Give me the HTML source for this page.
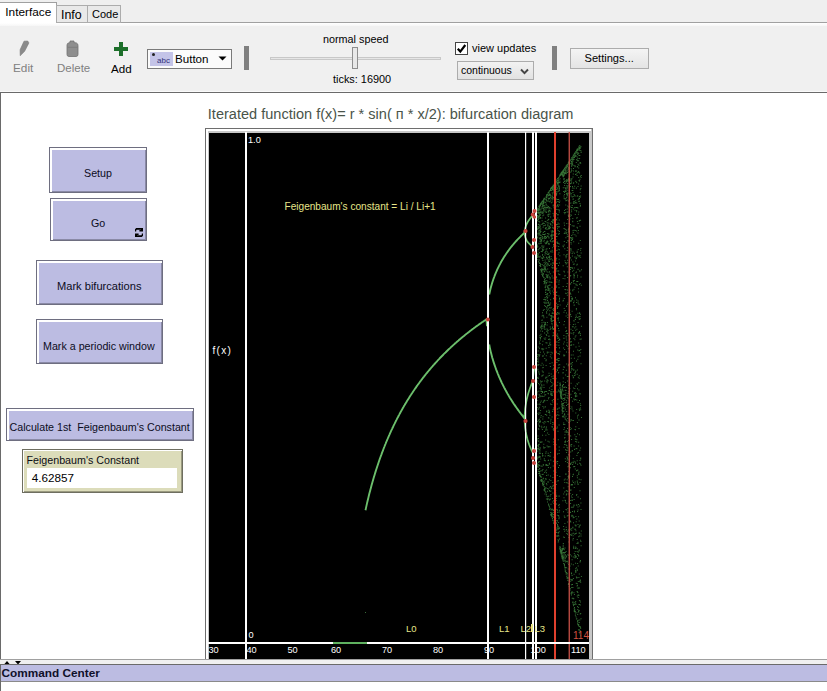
<!DOCTYPE html>
<html><head><meta charset="utf-8">
<style>
*{margin:0;padding:0;box-sizing:border-box}
html,body{width:827px;height:691px;overflow:hidden;background:#fff}
body{position:relative;font-family:"Liberation Sans",sans-serif;font-size:10.7px;color:#000}
.a{position:absolute}
.t{position:absolute;white-space:nowrap;line-height:1}
.btn{position:absolute;background:#bcbce2;border:1px solid #6e6e80;box-shadow:inset 2px 2px 0 #fff, inset -1px -1px 0 #8a8aa6}
.sep{position:absolute;background:#808080;width:5px}
</style></head><body>
<!-- tab strip -->
<div class="a" style="left:0;top:0;width:827px;height:26px;background:#efefef"></div>
<div class="a" style="left:0;top:22px;width:827px;height:1px;background:#a0a0a0"></div>
<div class="a" style="left:0;top:23px;width:827px;height:3px;background:linear-gradient(#fff,#f6f6f6)"></div>
<div class="a" style="left:0;top:2px;width:57px;height:21px;background:#fff;border:1px solid #a0a0a0;border-bottom:none;border-left:none"></div>
<div class="t" style="left:5.3px;top:7px;font-size:11.8px">Interface</div>
<div class="a" style="left:56px;top:5px;width:32px;height:18px;background:#e9e9e9;border:1px solid #acacac"></div>
<div class="t" style="left:61px;top:8.5px;font-size:12.4px">Info</div>
<div class="a" style="left:87px;top:5px;width:34px;height:18px;background:#e9e9e9;border:1px solid #acacac"></div>
<div class="t" style="left:92px;top:9px;font-size:11px">Code</div>

<!-- toolbar -->
<div class="a" style="left:0;top:26px;width:827px;height:66px;background:#f0f0f0"></div>
<div class="a" style="left:0;top:91px;width:827px;height:1px;background:#fafafa"></div>
<div class="a" style="left:0;top:92px;width:827px;height:1px;background:#6a6a6a"></div>
<!-- Edit icon -->
<svg class="a" style="left:15px;top:38px" width="20" height="20"><path d="M5.2 17.7 L5.1 11.8 L9 3.2 L12.7 3 L13.9 4.9 L9.6 13.3 Z" fill="#8a8a8a" stroke="#7a7a7a" stroke-width="0.6"/></svg>
<div class="t" style="left:13px;top:63px;font-size:11.8px;color:#808080">Edit</div>
<!-- Delete icon -->
<svg class="a" style="left:62px;top:38px" width="20" height="20"><path d="M8 3 L12 3 L12 4.6 L14.5 5 Q16 5.6 16 7.5 L16 16.5 Q16 18.5 14 18.5 L7 18.5 Q5 18.5 5 16.5 L5 7 Q5 5.2 7 4.8 L8 4.6 Z" fill="#8e8e8e" stroke="#727272" stroke-width="0.8"/><path d="M5.5 9.3 L15.5 9.3" stroke="#777" stroke-width="0.8"/></svg>
<div class="t" style="left:57px;top:63px;font-size:11.5px;color:#808080">Delete</div>
<!-- Add icon -->
<svg class="a" style="left:113px;top:41px" width="16" height="16"><path d="M6 1h4v5h5v4h-5v5h-4v-5h-5v-4h5z" fill="#1d6f2a"/></svg>
<div class="t" style="left:111px;top:62.5px;font-size:11.6px;color:#000">Add</div>
<!-- widget dropdown -->
<div class="a" style="left:147px;top:49px;width:85px;height:20px;background:#fbfbfb;border:1px solid #7a7a7a"></div>
<div class="a" style="left:150px;top:52px;width:23px;height:14px;background:#c4c4e8"></div>
<div class="t" style="left:157px;top:57px;font-size:8px;color:#30307a">abc</div>
<div class="a" style="left:152px;top:53px;width:3px;height:3px;background:#222;border-radius:50%"></div>
<div class="t" style="left:175px;top:53px;font-size:11.6px">Button</div>
<svg class="a" style="left:218px;top:56px" width="10" height="6"><path d="M0.5 0.5h8l-4 4z" fill="#000"/></svg>
<div class="sep" style="left:244px;top:46px;height:24px"></div>
<!-- speed slider -->
<div class="t" style="left:323px;top:34px;font-size:10.8px">normal speed</div>
<div class="a" style="left:270px;top:57px;width:171px;height:3px;background:#e6e6e6;border:1px solid #c8c8c8"></div>
<div class="a" style="left:352px;top:47px;width:6px;height:22px;background:#e8e8e8;border:1px solid #8e8e8e"></div>
<div class="t" style="left:333px;top:74px;font-size:10.9px">ticks: 16900</div>
<!-- view updates -->
<div class="a" style="left:455px;top:42px;width:13px;height:13px;background:#fff;border:1px solid #444"></div>
<svg class="a" style="left:456px;top:43px" width="11" height="11"><path d="M1.8 5.8 L4.3 8.6 L9.3 2" fill="none" stroke="#000" stroke-width="2.2"/></svg>
<div class="t" style="left:472px;top:43px;font-size:11px">view updates</div>
<div class="a" style="left:457px;top:61px;width:77px;height:19px;background:linear-gradient(#f2f2f2,#e2e2e2);border:1px solid #acacac"></div>
<div class="t" style="left:461px;top:65px;font-size:10.5px">continuous</div>
<svg class="a" style="left:520px;top:68px" width="9" height="7"><path d="M1 1.5 L4.5 5.2 L8 1.5" fill="none" stroke="#444" stroke-width="1.9"/></svg>
<div class="sep" style="left:552px;top:46px;height:24px"></div>
<div class="a" style="left:570px;top:48px;width:79px;height:21px;background:linear-gradient(#f4f4f4,#e4e4e4);border:1px solid #acacac"></div>
<div class="t" style="left:584.5px;top:53px;font-size:11.1px">Settings...</div>

<!-- interface area -->
<div class="a" style="left:0;top:92px;width:1px;height:568px;background:#6a6a6a"></div>

<div class="btn" style="left:49px;top:147px;width:98px;height:46px"></div>
<div class="t" style="left:84px;top:168px;color:#0c0c22">Setup</div>
<div class="btn" style="left:50px;top:198px;width:97px;height:43px"></div>
<div class="t" style="left:91px;top:218px;color:#0c0c22">Go</div>
<svg class="a" style="left:135px;top:228px" width="9" height="10"><g fill="#000"><path d="M1.2 0h6.8v3.6h-3.6v-1.6h1.6v-0.2h-4.4l-0.4 0.6v1h-1.2v-2.2z"/><path d="M6.8 9h-6.8v-3.6h3.6v1.6h-1.6v0.2h4.4l0.4-0.6v-1h1.2v2.2z"/></g></svg>
<div class="btn" style="left:36px;top:260px;width:127px;height:45px"></div>
<div class="t" style="left:57px;top:280.5px;font-size:11.1px;color:#0c0c22">Mark bifurcations</div>
<div class="btn" style="left:36px;top:319px;width:127px;height:45px"></div>
<div class="t" style="left:43px;top:341px;color:#0c0c22">Mark a periodic window</div>
<div class="btn" style="left:6px;top:408px;width:188px;height:33px"></div>
<div class="t" style="left:9.5px;top:422px;color:#0c0c22">Calculate 1st&nbsp; Feigenbaum's Constant</div>
<!-- monitor -->
<div class="a" style="left:22px;top:449px;width:161px;height:44px;background:#dcdcba;border:1px solid #6e6e60;box-shadow:inset 1px 1px 0 #fff, inset -1px -1px 0 #9a9a80"></div>
<div class="t" style="left:26.5px;top:455px;color:#0c0c14">Feigenbaum's Constant</div>
<div class="a" style="left:27px;top:468px;width:150px;height:20px;background:#fff"></div>
<div class="t" style="left:31.8px;top:471.5px;font-size:11.7px;color:#000">4.62857</div>

<!-- plot title -->
<div class="t" style="left:207.8px;top:107px;font-size:14.55px;color:#4a544a">Iterated function f(x)= r * sin( п * x/2): bifurcation diagram</div>

<!-- plot -->
<div class="a" style="left:205px;top:128px;width:388px;height:540px;background:#c8c8c8;border:1px solid #6e6e6e"></div>
<div class="a" style="left:206px;top:129px;width:2px;height:540px;background:#fff"></div>
<div class="a" style="left:206px;top:129px;width:385px;height:2px;background:#fff"></div>
<div class="a" style="left:209px;top:133px;width:380px;height:540px;background:#000"></div>
<svg class="a" style="left:0;top:0" width="827" height="659" viewBox="0 0 827 659">

<path d="M536.9 391.4h1v1h-1zM536.7 228.7h1v1h-1zM537.2 212.2h1v1h-1zM536.5 413.0h1v1h-1zM537.3 354.0h1v1h-1zM537.3 209.0h1v1h-1zM537.2 361.0h1v1h-1zM537.4 369.6h1v1h-1zM537.5 212.5h1v1h-1zM537.3 210.4h1v1h-1zM537.6 208.6h1v1h-1zM537.3 215.0h1v1h-1zM537.2 246.5h1v1h-1zM538.0 438.1h1v1h-1zM537.9 470.7h1v1h-1zM538.4 220.9h1v1h-1zM537.9 217.5h1v1h-1zM538.5 216.6h1v1h-1zM538.8 248.2h1v1h-1zM538.8 251.9h1v1h-1zM539.0 256.6h1v1h-1zM538.3 390.7h1v1h-1zM538.4 226.5h1v1h-1zM538.5 227.7h1v1h-1zM538.8 215.8h1v1h-1zM538.6 261.9h1v1h-1zM538.8 449.0h1v1h-1zM538.7 210.2h1v1h-1zM539.7 204.8h1v1h-1zM539.3 452.9h1v1h-1zM539.6 218.1h1v1h-1zM539.6 343.0h1v1h-1zM539.9 452.7h1v1h-1zM540.1 214.3h1v1h-1zM539.8 217.8h1v1h-1zM540.0 380.6h1v1h-1zM539.7 226.6h1v1h-1zM540.0 447.5h1v1h-1zM540.0 264.4h1v1h-1zM540.2 330.6h1v1h-1zM540.3 327.3h1v1h-1zM540.7 479.4h1v1h-1zM540.5 239.7h1v1h-1zM540.6 202.5h1v1h-1zM541.2 202.6h1v1h-1zM540.5 241.8h1v1h-1zM540.6 271.4h1v1h-1zM540.8 480.4h1v1h-1zM541.7 380.7h1v1h-1zM541.5 272.6h1v1h-1zM541.7 258.1h1v1h-1zM542.1 258.3h1v1h-1zM541.4 385.3h1v1h-1zM542.2 480.2h1v1h-1zM541.6 247.7h1v1h-1zM542.0 274.9h1v1h-1zM542.3 455.2h1v1h-1zM542.5 416.2h1v1h-1zM542.0 391.0h1v1h-1zM542.4 340.7h1v1h-1zM542.0 330.7h1v1h-1zM542.4 257.3h1v1h-1zM543.2 225.2h1v1h-1zM543.2 401.2h1v1h-1zM543.0 200.5h1v1h-1zM543.3 483.6h1v1h-1zM543.5 423.2h1v1h-1zM543.0 234.1h1v1h-1zM543.8 231.0h1v1h-1zM543.3 443.7h1v1h-1zM543.2 199.4h1v1h-1zM543.6 489.1h1v1h-1zM543.8 325.7h1v1h-1zM544.0 323.8h1v1h-1zM544.1 488.1h1v1h-1zM543.5 205.0h1v1h-1zM544.2 268.6h1v1h-1zM544.6 242.2h1v1h-1zM544.5 447.1h1v1h-1zM544.9 267.5h1v1h-1zM544.5 339.1h1v1h-1zM544.9 227.9h1v1h-1zM544.3 280.4h1v1h-1zM545.2 285.8h1v1h-1zM544.8 268.5h1v1h-1zM545.4 284.5h1v1h-1zM544.9 287.2h1v1h-1zM545.3 477.9h1v1h-1zM545.6 248.8h1v1h-1zM545.6 451.2h1v1h-1zM545.6 427.7h1v1h-1zM546.1 311.2h1v1h-1zM545.3 243.3h1v1h-1zM545.4 434.7h1v1h-1zM546.0 311.4h1v1h-1zM546.5 301.7h1v1h-1zM546.3 429.2h1v1h-1zM546.0 237.1h1v1h-1zM545.9 282.0h1v1h-1zM546.3 302.8h1v1h-1zM546.5 429.4h1v1h-1zM546.6 265.4h1v1h-1zM546.8 488.1h1v1h-1zM546.6 324.4h1v1h-1zM547.3 277.3h1v1h-1zM546.8 240.5h1v1h-1zM546.7 235.9h1v1h-1zM547.0 241.6h1v1h-1zM547.7 474.5h1v1h-1zM547.1 286.7h1v1h-1zM547.3 263.4h1v1h-1zM548.0 421.2h1v1h-1zM547.5 235.5h1v1h-1zM548.1 253.7h1v1h-1zM547.4 455.2h1v1h-1zM548.4 303.3h1v1h-1zM547.8 459.9h1v1h-1zM547.9 211.4h1v1h-1zM548.5 305.0h1v1h-1zM548.9 255.6h1v1h-1zM549.0 261.0h1v1h-1zM548.9 201.2h1v1h-1zM549.1 284.8h1v1h-1zM549.3 207.0h1v1h-1zM549.0 198.1h1v1h-1zM548.6 191.2h1v1h-1zM549.4 227.8h1v1h-1zM549.1 390.0h1v1h-1zM549.1 265.0h1v1h-1zM549.4 303.9h1v1h-1zM549.0 264.9h1v1h-1zM549.1 257.5h1v1h-1zM549.5 491.0h1v1h-1zM549.9 365.9h1v1h-1zM550.1 467.3h1v1h-1zM550.5 503.7h1v1h-1zM550.4 394.3h1v1h-1zM550.6 256.1h1v1h-1zM550.4 263.8h1v1h-1zM550.6 351.8h1v1h-1zM550.6 318.3h1v1h-1zM550.2 392.7h1v1h-1zM550.3 394.0h1v1h-1zM551.1 188.0h1v1h-1zM550.6 513.9h1v1h-1zM551.3 188.3h1v1h-1zM551.1 512.4h1v1h-1zM550.7 373.5h1v1h-1zM551.4 188.1h1v1h-1zM551.3 403.9h1v1h-1zM551.1 220.9h1v1h-1zM551.4 266.8h1v1h-1zM551.5 234.2h1v1h-1zM551.6 312.7h1v1h-1zM552.1 247.3h1v1h-1zM551.7 201.4h1v1h-1zM552.0 394.7h1v1h-1zM552.3 485.7h1v1h-1zM552.7 227.4h1v1h-1zM552.0 219.5h1v1h-1zM552.1 237.9h1v1h-1zM552.3 501.6h1v1h-1zM552.4 311.8h1v1h-1zM552.5 227.4h1v1h-1zM552.5 277.6h1v1h-1zM552.7 205.4h1v1h-1zM552.8 231.3h1v1h-1zM553.2 214.5h1v1h-1zM553.4 244.4h1v1h-1zM553.3 378.3h1v1h-1zM553.2 470.4h1v1h-1zM553.2 500.2h1v1h-1zM553.5 456.7h1v1h-1zM553.5 333.5h1v1h-1zM553.9 194.6h1v1h-1zM554.4 234.6h1v1h-1zM554.3 278.8h1v1h-1zM553.9 254.1h1v1h-1zM553.8 211.6h1v1h-1zM554.0 474.8h1v1h-1zM554.4 224.9h1v1h-1zM554.5 208.6h1v1h-1zM554.9 496.7h1v1h-1zM554.4 190.1h1v1h-1zM554.7 301.2h1v1h-1zM555.2 194.5h1v1h-1zM555.2 241.8h1v1h-1zM555.2 346.8h1v1h-1zM555.7 181.2h1v1h-1zM555.0 180.9h1v1h-1zM555.2 469.4h1v1h-1zM555.7 371.3h1v1h-1zM555.8 224.0h1v1h-1zM556.3 181.7h1v1h-1zM556.4 527.4h1v1h-1zM556.1 193.0h1v1h-1zM556.4 520.1h1v1h-1zM556.4 532.1h1v1h-1zM555.9 359.2h1v1h-1zM556.5 324.8h1v1h-1zM556.3 291.4h1v1h-1zM556.5 305.4h1v1h-1zM556.4 205.6h1v1h-1zM556.3 270.4h1v1h-1zM557.3 381.8h1v1h-1zM557.2 224.1h1v1h-1zM557.4 411.5h1v1h-1zM557.0 228.3h1v1h-1zM557.2 460.9h1v1h-1zM557.1 178.1h1v1h-1zM557.6 270.6h1v1h-1zM557.9 364.4h1v1h-1zM558.0 264.9h1v1h-1zM558.2 312.5h1v1h-1zM557.7 526.3h1v1h-1zM558.2 270.5h1v1h-1zM557.7 253.7h1v1h-1zM558.2 245.9h1v1h-1zM557.9 360.3h1v1h-1zM558.4 535.6h1v1h-1zM558.5 281.6h1v1h-1zM558.4 209.0h1v1h-1zM558.5 353.1h1v1h-1zM559.0 262.4h1v1h-1zM558.9 347.5h1v1h-1zM558.9 354.0h1v1h-1zM558.7 367.1h1v1h-1zM559.0 187.6h1v1h-1zM559.6 178.2h1v1h-1zM559.9 546.8h1v1h-1zM559.4 385.2h1v1h-1zM560.0 387.6h1v1h-1zM560.1 174.5h1v1h-1zM559.5 390.2h1v1h-1zM559.7 174.2h1v1h-1zM560.2 550.2h1v1h-1zM559.9 550.6h1v1h-1zM560.7 550.9h1v1h-1zM560.2 551.2h1v1h-1zM560.6 551.5h1v1h-1zM560.7 551.7h1v1h-1zM560.3 396.0h1v1h-1zM561.1 173.3h1v1h-1zM560.6 397.1h1v1h-1zM560.5 173.1h1v1h-1zM560.6 552.9h1v1h-1zM561.1 551.9h1v1h-1zM561.3 173.6h1v1h-1zM561.1 392.2h1v1h-1zM561.7 405.4h1v1h-1zM561.3 171.8h1v1h-1zM561.9 171.7h1v1h-1zM561.2 549.4h1v1h-1zM561.6 171.4h1v1h-1zM561.6 410.2h1v1h-1zM561.9 558.0h1v1h-1zM562.0 555.9h1v1h-1zM562.1 410.7h1v1h-1zM562.7 548.8h1v1h-1zM562.5 403.5h1v1h-1zM562.6 390.6h1v1h-1zM562.5 552.0h1v1h-1zM563.0 555.4h1v1h-1zM562.8 368.9h1v1h-1zM563.1 343.4h1v1h-1zM563.4 366.2h1v1h-1zM563.2 493.4h1v1h-1zM563.1 347.5h1v1h-1zM563.1 563.0h1v1h-1zM563.8 515.4h1v1h-1zM563.8 556.6h1v1h-1zM563.9 564.8h1v1h-1zM563.4 334.9h1v1h-1zM563.7 222.6h1v1h-1zM564.3 183.0h1v1h-1zM563.7 212.0h1v1h-1zM564.4 171.9h1v1h-1zM564.2 354.8h1v1h-1zM564.0 224.7h1v1h-1zM564.3 232.8h1v1h-1zM564.1 444.1h1v1h-1zM564.8 418.7h1v1h-1zM564.9 558.3h1v1h-1zM564.3 516.9h1v1h-1zM564.7 231.4h1v1h-1zM565.3 166.7h1v1h-1zM564.8 458.3h1v1h-1zM565.2 561.6h1v1h-1zM565.6 490.4h1v1h-1zM565.5 509.0h1v1h-1zM565.1 566.9h1v1h-1zM566.0 351.6h1v1h-1zM565.9 419.4h1v1h-1zM565.9 369.7h1v1h-1zM565.7 431.3h1v1h-1zM566.1 187.4h1v1h-1zM566.0 572.0h1v1h-1zM565.8 430.1h1v1h-1zM565.9 171.5h1v1h-1zM565.9 286.1h1v1h-1zM566.2 363.5h1v1h-1zM566.3 167.7h1v1h-1zM566.8 395.3h1v1h-1zM566.9 578.3h1v1h-1zM567.0 277.1h1v1h-1zM567.3 262.2h1v1h-1zM566.7 479.2h1v1h-1zM567.1 304.1h1v1h-1zM566.9 183.1h1v1h-1zM567.3 292.3h1v1h-1zM567.1 171.8h1v1h-1zM567.2 240.3h1v1h-1zM567.3 403.9h1v1h-1zM567.7 167.2h1v1h-1zM568.2 463.3h1v1h-1zM567.8 162.2h1v1h-1zM568.3 583.3h1v1h-1zM567.9 584.1h1v1h-1zM568.1 364.3h1v1h-1zM568.4 465.8h1v1h-1zM568.1 240.5h1v1h-1zM568.5 226.5h1v1h-1zM568.8 228.3h1v1h-1zM569.1 416.3h1v1h-1zM568.5 174.5h1v1h-1zM569.3 435.3h1v1h-1zM569.2 309.7h1v1h-1zM569.3 271.5h1v1h-1zM568.9 454.6h1v1h-1zM569.8 275.4h1v1h-1zM569.3 388.0h1v1h-1zM569.6 257.8h1v1h-1zM569.7 341.6h1v1h-1zM570.2 435.5h1v1h-1zM570.0 341.6h1v1h-1zM570.5 267.3h1v1h-1zM569.8 193.6h1v1h-1zM570.4 489.2h1v1h-1zM570.4 393.7h1v1h-1zM570.4 202.5h1v1h-1zM570.6 382.7h1v1h-1zM570.7 527.9h1v1h-1zM570.5 238.2h1v1h-1zM570.9 428.2h1v1h-1zM570.5 242.1h1v1h-1zM571.0 160.9h1v1h-1zM571.1 495.4h1v1h-1zM570.9 344.7h1v1h-1zM571.4 514.7h1v1h-1zM571.6 190.0h1v1h-1zM571.1 157.3h1v1h-1zM571.4 237.6h1v1h-1zM571.3 170.0h1v1h-1zM571.9 362.0h1v1h-1zM571.5 408.5h1v1h-1zM571.7 484.6h1v1h-1zM572.0 186.1h1v1h-1zM572.2 390.8h1v1h-1zM571.8 515.2h1v1h-1zM572.8 564.3h1v1h-1zM572.2 506.7h1v1h-1zM572.7 326.2h1v1h-1zM572.4 156.0h1v1h-1zM572.9 155.1h1v1h-1zM572.8 173.6h1v1h-1zM572.8 556.6h1v1h-1zM573.1 302.3h1v1h-1zM573.3 320.3h1v1h-1zM573.4 369.2h1v1h-1zM573.6 194.1h1v1h-1zM573.3 332.0h1v1h-1zM573.2 545.7h1v1h-1zM573.5 153.8h1v1h-1zM573.6 273.4h1v1h-1zM574.0 201.2h1v1h-1zM573.9 510.6h1v1h-1zM573.9 195.2h1v1h-1zM573.8 553.0h1v1h-1zM574.4 554.8h1v1h-1zM574.0 152.8h1v1h-1zM574.5 393.0h1v1h-1zM574.8 153.6h1v1h-1zM574.8 214.1h1v1h-1zM574.5 256.8h1v1h-1zM574.8 438.5h1v1h-1zM575.4 603.8h1v1h-1zM574.7 323.8h1v1h-1zM575.4 516.1h1v1h-1zM575.2 568.3h1v1h-1zM575.5 346.6h1v1h-1zM575.4 530.3h1v1h-1zM575.2 570.9h1v1h-1zM575.8 162.0h1v1h-1zM575.3 412.5h1v1h-1zM576.3 504.4h1v1h-1zM576.3 518.5h1v1h-1zM576.0 258.1h1v1h-1zM576.2 441.5h1v1h-1zM576.3 281.1h1v1h-1zM576.9 422.1h1v1h-1zM576.0 149.8h1v1h-1zM576.4 395.4h1v1h-1zM576.6 585.4h1v1h-1zM577.1 511.1h1v1h-1zM577.1 606.0h1v1h-1zM576.9 369.6h1v1h-1zM576.6 577.0h1v1h-1zM577.3 148.9h1v1h-1zM577.2 553.9h1v1h-1zM577.0 415.4h1v1h-1zM577.6 149.3h1v1h-1zM577.5 232.5h1v1h-1zM577.5 524.0h1v1h-1zM577.6 542.8h1v1h-1zM577.9 414.6h1v1h-1zM577.7 302.6h1v1h-1zM578.0 291.4h1v1h-1zM578.6 345.7h1v1h-1zM578.3 255.3h1v1h-1zM578.2 629.5h1v1h-1zM578.5 604.1h1v1h-1zM579.0 198.0h1v1h-1zM579.1 157.9h1v1h-1zM579.0 399.9h1v1h-1zM579.3 148.0h1v1h-1zM579.3 155.0h1v1h-1zM579.3 350.1h1v1h-1zM579.1 149.3h1v1h-1zM578.9 535.4h1v1h-1zM579.6 150.0h1v1h-1zM579.6 561.5h1v1h-1zM580.1 249.8h1v1h-1zM579.5 392.9h1v1h-1zM580.2 162.8h1v1h-1zM579.6 270.4h1v1h-1zM580.4 248.1h1v1h-1zM580.6 545.3h1v1h-1zM579.7 581.3h1v1h-1zM580.1 634.7h1v1h-1zM581.0 417.1h1v1h-1zM580.8 530.6h1v1h-1zM536.1 208.8h1v1h-1zM536.1 418.1h1v1h-1zM536.4 457.7h1v1h-1zM537.2 212.6h1v1h-1zM537.2 220.2h1v1h-1zM536.9 465.5h1v1h-1zM537.4 215.8h1v1h-1zM537.6 211.8h1v1h-1zM537.1 456.6h1v1h-1zM537.8 461.9h1v1h-1zM537.3 466.3h1v1h-1zM537.4 450.4h1v1h-1zM537.2 376.9h1v1h-1zM537.5 226.0h1v1h-1zM538.0 260.8h1v1h-1zM537.5 435.5h1v1h-1zM538.1 444.0h1v1h-1zM537.9 446.0h1v1h-1zM538.5 372.6h1v1h-1zM538.0 364.6h1v1h-1zM538.2 354.6h1v1h-1zM538.4 205.7h1v1h-1zM538.8 421.8h1v1h-1zM539.1 418.7h1v1h-1zM539.2 447.4h1v1h-1zM539.2 343.3h1v1h-1zM539.3 234.0h1v1h-1zM539.2 461.3h1v1h-1zM539.1 475.0h1v1h-1zM539.1 237.6h1v1h-1zM539.9 441.5h1v1h-1zM539.5 224.4h1v1h-1zM539.9 237.0h1v1h-1zM539.4 450.6h1v1h-1zM539.8 441.9h1v1h-1zM539.6 204.6h1v1h-1zM540.0 420.4h1v1h-1zM540.4 231.0h1v1h-1zM540.1 336.9h1v1h-1zM540.6 234.9h1v1h-1zM540.1 238.2h1v1h-1zM540.5 269.6h1v1h-1zM540.6 389.3h1v1h-1zM540.8 479.9h1v1h-1zM540.6 479.6h1v1h-1zM541.2 384.3h1v1h-1zM541.5 322.3h1v1h-1zM541.5 270.4h1v1h-1zM540.8 202.7h1v1h-1zM541.4 319.9h1v1h-1zM541.3 348.5h1v1h-1zM541.7 348.0h1v1h-1zM541.3 201.4h1v1h-1zM542.0 269.3h1v1h-1zM541.8 370.4h1v1h-1zM542.4 314.8h1v1h-1zM541.6 236.4h1v1h-1zM542.1 206.0h1v1h-1zM542.3 200.3h1v1h-1zM542.7 222.4h1v1h-1zM542.8 231.9h1v1h-1zM542.3 349.2h1v1h-1zM542.5 421.9h1v1h-1zM543.0 200.4h1v1h-1zM542.8 484.1h1v1h-1zM542.8 273.0h1v1h-1zM543.5 208.2h1v1h-1zM543.5 400.2h1v1h-1zM543.2 407.4h1v1h-1zM543.4 223.0h1v1h-1zM543.9 486.6h1v1h-1zM543.3 281.0h1v1h-1zM544.1 235.7h1v1h-1zM544.2 237.8h1v1h-1zM544.1 279.0h1v1h-1zM544.2 471.9h1v1h-1zM544.3 324.7h1v1h-1zM544.2 380.6h1v1h-1zM544.4 224.9h1v1h-1zM544.1 326.4h1v1h-1zM544.6 220.9h1v1h-1zM544.8 414.0h1v1h-1zM544.7 301.7h1v1h-1zM545.0 292.0h1v1h-1zM544.9 324.0h1v1h-1zM545.3 294.0h1v1h-1zM545.3 289.2h1v1h-1zM544.8 261.6h1v1h-1zM545.6 364.9h1v1h-1zM545.2 227.6h1v1h-1zM545.1 207.4h1v1h-1zM545.2 251.3h1v1h-1zM545.5 376.8h1v1h-1zM545.8 212.0h1v1h-1zM545.7 250.6h1v1h-1zM545.7 264.6h1v1h-1zM546.4 207.6h1v1h-1zM546.1 390.9h1v1h-1zM546.7 297.0h1v1h-1zM546.1 262.3h1v1h-1zM546.7 207.2h1v1h-1zM546.5 328.5h1v1h-1zM547.0 275.6h1v1h-1zM546.9 233.0h1v1h-1zM547.1 305.0h1v1h-1zM546.6 382.2h1v1h-1zM547.4 392.8h1v1h-1zM547.1 379.4h1v1h-1zM547.5 254.0h1v1h-1zM547.7 287.3h1v1h-1zM547.1 331.5h1v1h-1zM547.1 200.5h1v1h-1zM548.0 393.2h1v1h-1zM548.3 351.8h1v1h-1zM548.3 228.6h1v1h-1zM547.9 259.6h1v1h-1zM548.4 233.8h1v1h-1zM547.7 452.7h1v1h-1zM547.9 256.7h1v1h-1zM548.5 347.0h1v1h-1zM548.5 335.5h1v1h-1zM548.9 479.3h1v1h-1zM548.4 289.2h1v1h-1zM548.8 463.8h1v1h-1zM549.4 487.3h1v1h-1zM548.8 505.9h1v1h-1zM549.0 410.7h1v1h-1zM549.3 190.1h1v1h-1zM549.8 326.5h1v1h-1zM549.1 256.9h1v1h-1zM549.7 326.5h1v1h-1zM549.5 341.8h1v1h-1zM549.6 276.9h1v1h-1zM549.6 194.9h1v1h-1zM549.9 240.7h1v1h-1zM550.1 299.2h1v1h-1zM550.0 188.8h1v1h-1zM550.2 344.3h1v1h-1zM550.4 327.9h1v1h-1zM550.8 202.3h1v1h-1zM550.6 235.5h1v1h-1zM550.5 188.0h1v1h-1zM551.2 187.9h1v1h-1zM550.5 513.9h1v1h-1zM550.4 318.0h1v1h-1zM551.4 513.1h1v1h-1zM550.9 315.0h1v1h-1zM550.9 189.9h1v1h-1zM551.2 513.6h1v1h-1zM551.2 188.3h1v1h-1zM551.4 426.2h1v1h-1zM552.0 320.4h1v1h-1zM551.5 393.3h1v1h-1zM551.4 241.2h1v1h-1zM551.6 362.3h1v1h-1zM552.4 476.9h1v1h-1zM552.0 185.9h1v1h-1zM552.1 265.0h1v1h-1zM552.6 409.3h1v1h-1zM552.8 429.1h1v1h-1zM552.5 383.6h1v1h-1zM552.9 292.3h1v1h-1zM552.5 241.3h1v1h-1zM552.7 409.0h1v1h-1zM553.0 297.8h1v1h-1zM552.7 465.6h1v1h-1zM552.9 399.1h1v1h-1zM552.9 441.5h1v1h-1zM553.1 367.7h1v1h-1zM553.7 185.3h1v1h-1zM553.8 240.2h1v1h-1zM553.2 288.5h1v1h-1zM553.5 222.4h1v1h-1zM554.0 213.4h1v1h-1zM554.3 494.4h1v1h-1zM554.1 390.2h1v1h-1zM554.3 294.0h1v1h-1zM553.9 344.9h1v1h-1zM554.6 448.4h1v1h-1zM554.7 245.3h1v1h-1zM554.4 414.1h1v1h-1zM554.3 456.2h1v1h-1zM554.2 281.0h1v1h-1zM554.9 506.4h1v1h-1zM555.0 254.2h1v1h-1zM554.5 494.2h1v1h-1zM555.1 372.2h1v1h-1zM555.6 199.2h1v1h-1zM554.8 531.2h1v1h-1zM555.0 532.2h1v1h-1zM555.1 236.2h1v1h-1zM555.5 184.2h1v1h-1zM555.6 415.3h1v1h-1zM556.2 529.8h1v1h-1zM555.5 341.6h1v1h-1zM555.7 497.9h1v1h-1zM556.5 325.5h1v1h-1zM555.7 352.0h1v1h-1zM556.1 188.9h1v1h-1zM556.3 219.5h1v1h-1zM556.0 268.4h1v1h-1zM556.4 245.5h1v1h-1zM556.8 463.2h1v1h-1zM556.9 307.6h1v1h-1zM557.0 179.4h1v1h-1zM557.2 414.3h1v1h-1zM557.2 182.2h1v1h-1zM556.7 403.5h1v1h-1zM557.5 222.6h1v1h-1zM557.5 539.3h1v1h-1zM557.2 306.4h1v1h-1zM557.5 184.2h1v1h-1zM557.4 318.1h1v1h-1zM558.2 233.7h1v1h-1zM557.7 337.3h1v1h-1zM557.7 306.1h1v1h-1zM558.4 342.1h1v1h-1zM558.5 359.9h1v1h-1zM558.7 185.4h1v1h-1zM558.6 358.1h1v1h-1zM558.4 283.7h1v1h-1zM558.6 452.9h1v1h-1zM558.8 189.4h1v1h-1zM558.9 322.1h1v1h-1zM559.3 193.3h1v1h-1zM558.8 188.3h1v1h-1zM559.4 180.8h1v1h-1zM558.7 511.6h1v1h-1zM559.0 538.4h1v1h-1zM559.8 384.0h1v1h-1zM559.3 175.1h1v1h-1zM559.6 174.8h1v1h-1zM560.1 548.9h1v1h-1zM560.0 174.4h1v1h-1zM559.9 549.8h1v1h-1zM560.2 392.1h1v1h-1zM560.6 392.8h1v1h-1zM560.6 393.6h1v1h-1zM560.0 394.2h1v1h-1zM560.0 394.9h1v1h-1zM560.3 395.5h1v1h-1zM560.2 173.4h1v1h-1zM561.0 552.2h1v1h-1zM561.1 173.2h1v1h-1zM560.5 552.7h1v1h-1zM560.6 398.1h1v1h-1zM560.9 395.4h1v1h-1zM561.4 551.2h1v1h-1zM561.6 172.1h1v1h-1zM561.4 173.9h1v1h-1zM561.6 556.3h1v1h-1zM562.0 556.6h1v1h-1zM562.1 388.6h1v1h-1zM561.4 557.5h1v1h-1zM562.1 174.7h1v1h-1zM562.3 410.5h1v1h-1zM562.5 404.9h1v1h-1zM562.1 174.4h1v1h-1zM562.0 386.6h1v1h-1zM562.4 171.9h1v1h-1zM562.4 170.3h1v1h-1zM562.5 394.6h1v1h-1zM563.0 403.1h1v1h-1zM563.0 174.6h1v1h-1zM563.1 191.1h1v1h-1zM563.2 175.5h1v1h-1zM562.7 265.3h1v1h-1zM562.8 187.2h1v1h-1zM563.2 422.5h1v1h-1zM563.7 308.0h1v1h-1zM563.6 405.6h1v1h-1zM563.9 427.2h1v1h-1zM563.8 198.3h1v1h-1zM564.1 413.2h1v1h-1zM564.4 523.1h1v1h-1zM564.2 441.4h1v1h-1zM564.5 555.3h1v1h-1zM564.7 180.3h1v1h-1zM564.5 407.5h1v1h-1zM564.7 386.5h1v1h-1zM564.1 193.9h1v1h-1zM564.1 174.5h1v1h-1zM565.1 409.2h1v1h-1zM564.5 309.9h1v1h-1zM564.7 389.7h1v1h-1zM564.6 570.6h1v1h-1zM565.2 208.9h1v1h-1zM564.7 417.4h1v1h-1zM565.6 257.2h1v1h-1zM565.2 292.7h1v1h-1zM565.7 431.6h1v1h-1zM566.0 180.6h1v1h-1zM565.9 173.2h1v1h-1zM565.7 169.8h1v1h-1zM566.0 180.7h1v1h-1zM566.4 509.5h1v1h-1zM566.3 445.1h1v1h-1zM566.0 179.3h1v1h-1zM565.8 556.1h1v1h-1zM566.8 266.3h1v1h-1zM566.6 171.7h1v1h-1zM566.2 567.2h1v1h-1zM566.8 164.3h1v1h-1zM566.9 462.1h1v1h-1zM566.7 283.1h1v1h-1zM567.4 314.4h1v1h-1zM566.8 236.1h1v1h-1zM566.8 234.2h1v1h-1zM567.1 521.4h1v1h-1zM567.2 253.8h1v1h-1zM567.9 554.8h1v1h-1zM567.8 365.2h1v1h-1zM567.3 164.2h1v1h-1zM567.7 568.5h1v1h-1zM567.5 211.6h1v1h-1zM568.2 583.4h1v1h-1zM568.5 475.6h1v1h-1zM567.8 477.7h1v1h-1zM568.3 168.6h1v1h-1zM568.1 214.4h1v1h-1zM568.3 363.8h1v1h-1zM568.8 399.5h1v1h-1zM569.2 394.8h1v1h-1zM568.6 167.1h1v1h-1zM568.9 546.5h1v1h-1zM568.8 179.5h1v1h-1zM568.7 223.1h1v1h-1zM569.3 292.2h1v1h-1zM569.0 198.7h1v1h-1zM569.6 283.7h1v1h-1zM569.7 160.1h1v1h-1zM569.2 321.7h1v1h-1zM569.8 183.2h1v1h-1zM569.5 178.5h1v1h-1zM570.2 182.9h1v1h-1zM569.8 300.2h1v1h-1zM570.3 489.9h1v1h-1zM570.3 249.2h1v1h-1zM570.4 158.9h1v1h-1zM570.1 464.1h1v1h-1zM570.8 159.2h1v1h-1zM570.5 328.8h1v1h-1zM571.0 367.8h1v1h-1zM570.8 171.3h1v1h-1zM570.8 357.8h1v1h-1zM571.2 586.9h1v1h-1zM570.9 259.6h1v1h-1zM571.5 178.2h1v1h-1zM571.2 298.2h1v1h-1zM571.6 499.6h1v1h-1zM571.7 597.7h1v1h-1zM572.0 368.6h1v1h-1zM571.6 559.2h1v1h-1zM571.6 164.8h1v1h-1zM572.4 159.4h1v1h-1zM572.0 239.0h1v1h-1zM572.0 511.0h1v1h-1zM572.4 156.0h1v1h-1zM572.1 298.3h1v1h-1zM572.9 419.9h1v1h-1zM572.8 280.2h1v1h-1zM572.7 195.9h1v1h-1zM572.5 601.5h1v1h-1zM573.1 604.3h1v1h-1zM573.3 548.1h1v1h-1zM573.3 398.6h1v1h-1zM573.5 229.8h1v1h-1zM572.8 202.6h1v1h-1zM573.5 159.0h1v1h-1zM573.8 486.9h1v1h-1zM573.5 187.8h1v1h-1zM573.2 369.7h1v1h-1zM573.7 608.3h1v1h-1zM573.5 283.0h1v1h-1zM573.4 465.9h1v1h-1zM574.4 286.7h1v1h-1zM574.4 483.4h1v1h-1zM574.3 388.1h1v1h-1zM574.5 392.8h1v1h-1zM574.6 611.3h1v1h-1zM574.5 152.6h1v1h-1zM574.2 608.7h1v1h-1zM574.5 428.9h1v1h-1zM574.8 318.8h1v1h-1zM575.0 173.9h1v1h-1zM574.8 532.9h1v1h-1zM574.7 195.6h1v1h-1zM575.0 297.3h1v1h-1zM575.0 429.2h1v1h-1zM575.8 170.6h1v1h-1zM575.2 329.7h1v1h-1zM575.5 436.2h1v1h-1zM575.7 582.8h1v1h-1zM575.6 155.2h1v1h-1zM575.9 271.6h1v1h-1zM576.1 301.9h1v1h-1zM575.6 314.5h1v1h-1zM576.6 175.0h1v1h-1zM576.3 264.6h1v1h-1zM576.0 159.2h1v1h-1zM577.0 620.3h1v1h-1zM576.3 149.6h1v1h-1zM576.9 477.2h1v1h-1zM576.8 284.7h1v1h-1zM576.7 538.9h1v1h-1zM576.9 153.4h1v1h-1zM577.1 452.8h1v1h-1zM577.1 623.3h1v1h-1zM577.0 388.2h1v1h-1zM577.3 154.1h1v1h-1zM577.4 621.8h1v1h-1zM577.8 376.8h1v1h-1zM577.4 312.7h1v1h-1zM577.3 358.7h1v1h-1zM578.2 153.0h1v1h-1zM577.6 223.0h1v1h-1zM578.2 242.7h1v1h-1zM578.2 167.4h1v1h-1zM578.8 319.0h1v1h-1zM578.1 611.3h1v1h-1zM578.9 532.7h1v1h-1zM578.2 472.8h1v1h-1zM578.4 595.1h1v1h-1zM579.0 147.0h1v1h-1zM578.6 626.0h1v1h-1zM579.1 604.1h1v1h-1zM579.3 162.4h1v1h-1zM578.8 621.9h1v1h-1zM579.6 338.8h1v1h-1zM579.3 619.5h1v1h-1zM580.0 407.4h1v1h-1zM579.1 331.0h1v1h-1zM579.3 144.9h1v1h-1zM579.9 579.5h1v1h-1zM579.7 282.9h1v1h-1zM579.9 334.9h1v1h-1zM580.5 363.3h1v1h-1zM580.0 463.5h1v1h-1zM579.9 627.4h1v1h-1zM580.6 150.4h1v1h-1zM580.9 325.8h1v1h-1zM536.8 466.3h1v1h-1zM536.6 215.0h1v1h-1zM536.4 246.5h1v1h-1zM536.4 456.9h1v1h-1zM536.6 438.2h1v1h-1zM536.7 255.4h1v1h-1zM537.5 448.6h1v1h-1zM537.1 458.5h1v1h-1zM536.9 244.5h1v1h-1zM537.5 250.4h1v1h-1zM537.5 255.7h1v1h-1zM537.1 237.5h1v1h-1zM538.2 208.8h1v1h-1zM538.2 423.5h1v1h-1zM537.7 346.5h1v1h-1zM538.3 223.7h1v1h-1zM538.1 230.6h1v1h-1zM538.4 232.4h1v1h-1zM538.5 209.2h1v1h-1zM538.6 212.1h1v1h-1zM538.4 217.5h1v1h-1zM538.2 472.9h1v1h-1zM539.0 213.8h1v1h-1zM538.7 212.1h1v1h-1zM538.8 232.8h1v1h-1zM539.3 225.0h1v1h-1zM539.3 403.8h1v1h-1zM539.7 247.3h1v1h-1zM539.2 264.9h1v1h-1zM539.5 395.2h1v1h-1zM539.1 226.5h1v1h-1zM539.2 426.0h1v1h-1zM539.5 396.3h1v1h-1zM539.6 234.7h1v1h-1zM539.8 226.3h1v1h-1zM539.7 475.0h1v1h-1zM540.5 211.1h1v1h-1zM540.1 409.9h1v1h-1zM540.2 228.8h1v1h-1zM540.8 400.6h1v1h-1zM540.8 392.9h1v1h-1zM540.9 326.3h1v1h-1zM541.1 202.7h1v1h-1zM541.0 270.1h1v1h-1zM540.7 269.5h1v1h-1zM541.5 202.6h1v1h-1zM540.6 243.1h1v1h-1zM541.6 324.3h1v1h-1zM541.2 479.2h1v1h-1zM541.2 245.6h1v1h-1zM541.5 217.4h1v1h-1zM541.5 217.6h1v1h-1zM542.1 482.3h1v1h-1zM542.1 325.8h1v1h-1zM542.1 204.7h1v1h-1zM541.7 251.2h1v1h-1zM542.0 395.7h1v1h-1zM541.8 470.3h1v1h-1zM542.5 485.0h1v1h-1zM541.9 428.9h1v1h-1zM542.4 405.9h1v1h-1zM542.3 215.3h1v1h-1zM543.1 208.1h1v1h-1zM543.2 484.3h1v1h-1zM542.7 273.9h1v1h-1zM543.4 317.2h1v1h-1zM542.8 464.0h1v1h-1zM543.4 199.7h1v1h-1zM543.1 201.1h1v1h-1zM543.3 426.7h1v1h-1zM543.6 277.2h1v1h-1zM543.5 301.7h1v1h-1zM543.4 396.1h1v1h-1zM543.9 391.2h1v1h-1zM544.2 305.0h1v1h-1zM544.5 254.6h1v1h-1zM543.9 236.3h1v1h-1zM544.0 198.4h1v1h-1zM543.9 421.3h1v1h-1zM544.1 233.9h1v1h-1zM544.0 431.1h1v1h-1zM544.3 201.5h1v1h-1zM544.9 266.2h1v1h-1zM544.4 281.4h1v1h-1zM545.0 236.0h1v1h-1zM544.8 277.9h1v1h-1zM544.8 285.7h1v1h-1zM545.2 337.6h1v1h-1zM545.2 201.9h1v1h-1zM545.3 414.1h1v1h-1zM545.1 464.6h1v1h-1zM545.7 359.2h1v1h-1zM546.1 197.0h1v1h-1zM545.3 452.7h1v1h-1zM545.5 360.3h1v1h-1zM546.1 330.7h1v1h-1zM545.9 464.0h1v1h-1zM546.0 194.5h1v1h-1zM546.8 271.5h1v1h-1zM546.2 334.9h1v1h-1zM546.9 464.8h1v1h-1zM546.7 228.7h1v1h-1zM546.2 308.4h1v1h-1zM546.6 399.9h1v1h-1zM546.5 258.5h1v1h-1zM547.0 194.0h1v1h-1zM547.5 193.2h1v1h-1zM546.8 194.2h1v1h-1zM546.8 351.5h1v1h-1zM546.9 286.3h1v1h-1zM547.3 224.2h1v1h-1zM547.3 481.5h1v1h-1zM548.2 192.3h1v1h-1zM548.1 206.0h1v1h-1zM548.3 409.8h1v1h-1zM548.1 339.0h1v1h-1zM548.4 397.1h1v1h-1zM548.4 225.4h1v1h-1zM548.1 344.9h1v1h-1zM548.6 208.6h1v1h-1zM548.3 218.7h1v1h-1zM548.6 259.5h1v1h-1zM549.0 281.4h1v1h-1zM548.5 237.6h1v1h-1zM548.6 271.7h1v1h-1zM549.4 304.4h1v1h-1zM549.1 193.7h1v1h-1zM548.9 509.0h1v1h-1zM549.1 227.2h1v1h-1zM549.2 343.3h1v1h-1zM549.9 226.9h1v1h-1zM549.6 211.3h1v1h-1zM550.1 302.5h1v1h-1zM549.8 495.5h1v1h-1zM550.3 379.2h1v1h-1zM550.4 263.5h1v1h-1zM550.2 512.1h1v1h-1zM550.5 208.3h1v1h-1zM550.1 224.2h1v1h-1zM550.0 475.5h1v1h-1zM550.6 390.9h1v1h-1zM550.2 514.1h1v1h-1zM550.7 514.3h1v1h-1zM550.9 318.1h1v1h-1zM551.2 235.3h1v1h-1zM551.4 316.3h1v1h-1zM550.8 239.1h1v1h-1zM551.6 508.6h1v1h-1zM551.3 317.0h1v1h-1zM551.5 512.9h1v1h-1zM551.5 197.9h1v1h-1zM551.9 231.4h1v1h-1zM551.5 186.4h1v1h-1zM551.3 376.3h1v1h-1zM552.2 193.6h1v1h-1zM552.2 251.6h1v1h-1zM552.3 519.4h1v1h-1zM551.8 323.5h1v1h-1zM552.0 188.5h1v1h-1zM552.5 198.5h1v1h-1zM552.7 185.7h1v1h-1zM552.8 271.5h1v1h-1zM552.8 375.5h1v1h-1zM553.0 187.7h1v1h-1zM552.5 262.1h1v1h-1zM553.0 234.4h1v1h-1zM552.9 184.9h1v1h-1zM553.4 207.2h1v1h-1zM553.3 189.0h1v1h-1zM553.6 520.4h1v1h-1zM553.7 377.3h1v1h-1zM554.0 276.8h1v1h-1zM554.1 420.9h1v1h-1zM553.4 444.0h1v1h-1zM554.1 277.7h1v1h-1zM553.9 182.9h1v1h-1zM553.7 266.8h1v1h-1zM554.2 202.2h1v1h-1zM554.6 212.4h1v1h-1zM554.7 364.5h1v1h-1zM554.1 187.1h1v1h-1zM554.3 220.6h1v1h-1zM554.9 289.3h1v1h-1zM555.3 299.1h1v1h-1zM554.5 343.9h1v1h-1zM554.6 276.1h1v1h-1zM555.3 184.6h1v1h-1zM555.3 481.3h1v1h-1zM555.6 350.7h1v1h-1zM555.1 352.9h1v1h-1zM555.5 385.3h1v1h-1zM555.9 522.7h1v1h-1zM555.6 185.8h1v1h-1zM555.7 347.1h1v1h-1zM555.4 202.6h1v1h-1zM556.3 281.6h1v1h-1zM556.0 219.1h1v1h-1zM556.1 193.8h1v1h-1zM556.5 509.1h1v1h-1zM556.8 426.4h1v1h-1zM556.9 312.0h1v1h-1zM556.4 362.1h1v1h-1zM556.8 226.3h1v1h-1zM556.7 242.1h1v1h-1zM557.2 535.7h1v1h-1zM557.3 183.5h1v1h-1zM557.3 527.8h1v1h-1zM557.5 179.6h1v1h-1zM557.3 417.9h1v1h-1zM557.5 367.6h1v1h-1zM557.2 242.9h1v1h-1zM557.8 521.9h1v1h-1zM557.5 226.2h1v1h-1zM557.9 389.4h1v1h-1zM557.4 203.9h1v1h-1zM557.9 242.7h1v1h-1zM558.2 199.1h1v1h-1zM558.3 185.8h1v1h-1zM558.4 518.3h1v1h-1zM558.2 186.6h1v1h-1zM558.7 279.8h1v1h-1zM558.8 211.4h1v1h-1zM558.8 506.8h1v1h-1zM558.7 219.6h1v1h-1zM558.6 495.7h1v1h-1zM559.1 509.8h1v1h-1zM558.7 531.2h1v1h-1zM559.6 304.5h1v1h-1zM559.2 363.9h1v1h-1zM559.2 175.4h1v1h-1zM559.5 547.3h1v1h-1zM559.2 548.3h1v1h-1zM560.1 389.1h1v1h-1zM560.3 549.4h1v1h-1zM560.2 391.2h1v1h-1zM560.1 174.1h1v1h-1zM560.5 173.9h1v1h-1zM560.0 173.8h1v1h-1zM560.3 173.7h1v1h-1zM560.1 173.6h1v1h-1zM560.4 173.5h1v1h-1zM561.0 552.0h1v1h-1zM560.9 396.6h1v1h-1zM560.8 552.5h1v1h-1zM560.9 397.6h1v1h-1zM561.1 173.0h1v1h-1zM561.2 172.6h1v1h-1zM561.2 393.5h1v1h-1zM561.3 555.5h1v1h-1zM561.0 550.3h1v1h-1zM561.4 406.3h1v1h-1zM561.8 407.1h1v1h-1zM561.4 171.6h1v1h-1zM561.6 409.2h1v1h-1zM562.2 547.9h1v1h-1zM561.6 174.6h1v1h-1zM561.8 172.7h1v1h-1zM562.5 548.5h1v1h-1zM561.9 170.8h1v1h-1zM562.2 555.8h1v1h-1zM562.9 560.4h1v1h-1zM562.5 170.3h1v1h-1zM563.0 171.4h1v1h-1zM563.1 547.9h1v1h-1zM562.4 500.2h1v1h-1zM562.7 545.3h1v1h-1zM563.5 311.7h1v1h-1zM563.0 511.3h1v1h-1zM563.2 178.5h1v1h-1zM563.8 232.9h1v1h-1zM563.1 170.9h1v1h-1zM564.1 181.0h1v1h-1zM563.8 479.5h1v1h-1zM563.9 173.1h1v1h-1zM563.4 324.3h1v1h-1zM564.1 191.9h1v1h-1zM564.4 401.9h1v1h-1zM564.1 530.8h1v1h-1zM563.9 170.2h1v1h-1zM564.0 167.7h1v1h-1zM564.1 491.6h1v1h-1zM564.5 547.6h1v1h-1zM565.0 170.2h1v1h-1zM564.4 228.4h1v1h-1zM564.8 166.8h1v1h-1zM564.9 441.7h1v1h-1zM565.0 449.3h1v1h-1zM565.2 173.0h1v1h-1zM565.3 327.2h1v1h-1zM565.1 255.5h1v1h-1zM565.8 181.5h1v1h-1zM565.6 529.6h1v1h-1zM565.6 551.1h1v1h-1zM566.3 561.1h1v1h-1zM566.1 529.0h1v1h-1zM565.7 293.0h1v1h-1zM566.6 192.6h1v1h-1zM566.3 533.0h1v1h-1zM566.1 402.2h1v1h-1zM566.1 306.1h1v1h-1zM566.1 555.4h1v1h-1zM566.3 431.7h1v1h-1zM566.5 577.4h1v1h-1zM566.6 211.5h1v1h-1zM567.4 271.4h1v1h-1zM567.1 219.0h1v1h-1zM566.8 376.1h1v1h-1zM567.1 380.6h1v1h-1zM567.2 317.1h1v1h-1zM567.0 332.9h1v1h-1zM567.5 398.1h1v1h-1zM567.6 169.2h1v1h-1zM568.1 577.4h1v1h-1zM567.7 434.3h1v1h-1zM568.1 440.1h1v1h-1zM568.2 476.0h1v1h-1zM567.8 229.2h1v1h-1zM568.3 232.3h1v1h-1zM568.2 564.1h1v1h-1zM568.1 432.2h1v1h-1zM568.0 168.6h1v1h-1zM569.1 162.0h1v1h-1zM568.3 161.3h1v1h-1zM569.2 568.4h1v1h-1zM568.8 375.7h1v1h-1zM568.6 531.6h1v1h-1zM569.6 408.1h1v1h-1zM569.4 251.9h1v1h-1zM569.2 475.4h1v1h-1zM569.7 267.3h1v1h-1zM569.7 589.6h1v1h-1zM569.5 205.7h1v1h-1zM569.9 520.4h1v1h-1zM570.0 534.3h1v1h-1zM569.6 521.1h1v1h-1zM570.2 237.0h1v1h-1zM570.5 250.5h1v1h-1zM570.4 341.3h1v1h-1zM570.6 593.2h1v1h-1zM570.9 209.4h1v1h-1zM570.8 592.2h1v1h-1zM570.6 195.5h1v1h-1zM570.8 163.4h1v1h-1zM571.1 555.4h1v1h-1zM571.0 168.6h1v1h-1zM570.6 484.6h1v1h-1zM570.7 316.1h1v1h-1zM571.0 534.7h1v1h-1zM571.6 238.7h1v1h-1zM571.1 267.2h1v1h-1zM571.3 515.7h1v1h-1zM571.9 161.8h1v1h-1zM571.3 406.6h1v1h-1zM571.6 575.0h1v1h-1zM571.7 591.4h1v1h-1zM571.5 364.6h1v1h-1zM572.3 289.6h1v1h-1zM572.0 601.7h1v1h-1zM572.2 237.4h1v1h-1zM572.2 163.8h1v1h-1zM572.1 270.7h1v1h-1zM572.9 482.0h1v1h-1zM572.3 526.7h1v1h-1zM572.6 535.2h1v1h-1zM573.1 376.4h1v1h-1zM572.8 155.4h1v1h-1zM573.1 387.5h1v1h-1zM573.0 462.2h1v1h-1zM573.4 592.2h1v1h-1zM573.2 241.3h1v1h-1zM573.5 505.3h1v1h-1zM573.1 158.4h1v1h-1zM573.2 547.0h1v1h-1zM573.8 263.6h1v1h-1zM574.2 207.2h1v1h-1zM574.5 256.4h1v1h-1zM574.4 234.3h1v1h-1zM574.2 153.1h1v1h-1zM574.4 152.9h1v1h-1zM574.6 555.8h1v1h-1zM574.7 611.8h1v1h-1zM575.1 547.9h1v1h-1zM574.5 166.2h1v1h-1zM574.7 202.5h1v1h-1zM575.2 546.5h1v1h-1zM574.7 336.5h1v1h-1zM574.7 481.6h1v1h-1zM575.6 235.6h1v1h-1zM574.8 165.6h1v1h-1zM575.8 556.4h1v1h-1zM575.9 187.8h1v1h-1zM575.3 170.8h1v1h-1zM576.0 470.3h1v1h-1zM575.6 603.8h1v1h-1zM575.7 284.6h1v1h-1zM576.5 226.8h1v1h-1zM576.5 206.9h1v1h-1zM576.5 542.9h1v1h-1zM576.2 299.5h1v1h-1zM576.9 591.2h1v1h-1zM576.6 582.9h1v1h-1zM577.1 620.9h1v1h-1zM576.9 220.9h1v1h-1zM576.3 256.8h1v1h-1zM577.2 349.5h1v1h-1zM577.3 609.1h1v1h-1zM577.5 185.9h1v1h-1zM577.3 592.0h1v1h-1zM576.8 148.5h1v1h-1zM577.8 606.9h1v1h-1zM577.4 587.6h1v1h-1zM577.3 150.0h1v1h-1zM577.4 207.6h1v1h-1zM577.5 158.1h1v1h-1zM578.2 610.3h1v1h-1zM577.6 402.0h1v1h-1zM578.5 350.2h1v1h-1zM577.7 565.5h1v1h-1zM578.5 197.7h1v1h-1zM578.1 554.7h1v1h-1zM578.5 332.8h1v1h-1zM578.3 211.4h1v1h-1zM579.1 505.4h1v1h-1zM578.5 629.1h1v1h-1zM578.9 600.2h1v1h-1zM579.1 532.6h1v1h-1zM579.1 580.8h1v1h-1zM578.9 587.4h1v1h-1zM579.1 172.5h1v1h-1zM579.8 580.0h1v1h-1zM579.1 147.8h1v1h-1zM579.1 180.6h1v1h-1zM580.1 635.6h1v1h-1zM580.2 458.4h1v1h-1zM580.1 256.8h1v1h-1zM580.0 175.7h1v1h-1zM580.6 152.0h1v1h-1zM580.1 195.6h1v1h-1zM579.8 604.6h1v1h-1zM580.5 618.3h1v1h-1zM580.6 185.6h1v1h-1zM536.9 257.0h1v1h-1zM536.2 450.9h1v1h-1zM537.1 377.6h1v1h-1zM536.8 245.5h1v1h-1zM537.1 227.4h1v1h-1zM536.9 358.6h1v1h-1zM536.9 236.4h1v1h-1zM537.0 246.7h1v1h-1zM537.1 381.6h1v1h-1zM537.4 368.7h1v1h-1zM537.6 357.4h1v1h-1zM537.9 397.0h1v1h-1zM537.4 465.6h1v1h-1zM537.8 216.1h1v1h-1zM537.9 224.0h1v1h-1zM538.3 428.8h1v1h-1zM538.3 412.4h1v1h-1zM538.3 408.2h1v1h-1zM538.5 464.4h1v1h-1zM538.3 456.9h1v1h-1zM538.8 443.7h1v1h-1zM538.9 263.0h1v1h-1zM538.8 452.6h1v1h-1zM538.4 456.8h1v1h-1zM538.8 406.7h1v1h-1zM538.8 425.0h1v1h-1zM538.8 206.4h1v1h-1zM539.0 373.7h1v1h-1zM539.6 336.9h1v1h-1zM539.2 204.7h1v1h-1zM539.4 421.1h1v1h-1zM539.5 214.9h1v1h-1zM539.4 204.4h1v1h-1zM539.9 401.7h1v1h-1zM539.8 421.4h1v1h-1zM540.4 264.0h1v1h-1zM540.2 458.6h1v1h-1zM540.7 206.5h1v1h-1zM540.7 415.1h1v1h-1zM540.4 203.9h1v1h-1zM540.0 203.0h1v1h-1zM540.3 239.2h1v1h-1zM540.3 479.7h1v1h-1zM541.0 325.2h1v1h-1zM540.5 326.3h1v1h-1zM541.1 479.7h1v1h-1zM540.9 381.3h1v1h-1zM541.2 240.7h1v1h-1zM541.6 268.5h1v1h-1zM541.2 375.4h1v1h-1zM541.2 441.8h1v1h-1zM541.4 441.3h1v1h-1zM542.1 272.5h1v1h-1zM541.9 238.2h1v1h-1zM541.7 473.9h1v1h-1zM541.6 362.8h1v1h-1zM541.7 200.7h1v1h-1zM542.0 254.8h1v1h-1zM542.4 276.1h1v1h-1zM542.4 212.7h1v1h-1zM542.8 201.9h1v1h-1zM543.1 446.4h1v1h-1zM542.8 464.7h1v1h-1zM542.6 274.4h1v1h-1zM543.2 315.7h1v1h-1zM542.6 246.8h1v1h-1zM543.4 245.4h1v1h-1zM543.6 486.1h1v1h-1zM543.6 482.2h1v1h-1zM543.0 209.8h1v1h-1zM543.6 308.9h1v1h-1zM543.9 267.5h1v1h-1zM543.6 198.4h1v1h-1zM544.1 198.0h1v1h-1zM543.6 262.2h1v1h-1zM544.0 353.5h1v1h-1zM544.2 394.4h1v1h-1zM544.5 488.8h1v1h-1zM544.2 205.4h1v1h-1zM544.2 399.7h1v1h-1zM544.7 211.2h1v1h-1zM544.2 480.5h1v1h-1zM544.6 328.8h1v1h-1zM544.8 299.6h1v1h-1zM545.2 394.3h1v1h-1zM544.9 306.0h1v1h-1zM545.2 291.8h1v1h-1zM545.4 221.3h1v1h-1zM545.5 479.1h1v1h-1zM545.9 200.4h1v1h-1zM545.5 243.0h1v1h-1zM545.7 204.5h1v1h-1zM545.2 491.8h1v1h-1zM545.5 228.6h1v1h-1zM545.6 203.4h1v1h-1zM545.7 227.1h1v1h-1zM546.1 241.4h1v1h-1zM545.9 498.4h1v1h-1zM546.4 316.7h1v1h-1zM546.7 222.2h1v1h-1zM546.1 241.9h1v1h-1zM546.3 410.5h1v1h-1zM546.7 253.8h1v1h-1zM546.3 194.3h1v1h-1zM546.5 342.4h1v1h-1zM547.1 499.3h1v1h-1zM547.0 501.5h1v1h-1zM547.6 498.6h1v1h-1zM547.4 206.9h1v1h-1zM547.7 288.0h1v1h-1zM547.3 420.9h1v1h-1zM547.5 264.1h1v1h-1zM548.1 503.6h1v1h-1zM547.9 467.1h1v1h-1zM548.3 195.1h1v1h-1zM547.8 216.1h1v1h-1zM547.7 192.0h1v1h-1zM548.4 417.5h1v1h-1zM547.9 210.5h1v1h-1zM548.0 459.8h1v1h-1zM548.4 433.9h1v1h-1zM548.8 338.6h1v1h-1zM548.6 295.3h1v1h-1zM549.1 387.5h1v1h-1zM548.9 313.5h1v1h-1zM548.8 256.6h1v1h-1zM549.1 499.3h1v1h-1zM549.3 310.2h1v1h-1zM548.9 412.1h1v1h-1zM549.5 210.3h1v1h-1zM549.2 412.6h1v1h-1zM550.1 452.1h1v1h-1zM549.7 258.7h1v1h-1zM549.5 284.6h1v1h-1zM549.4 190.3h1v1h-1zM549.7 328.9h1v1h-1zM549.9 315.2h1v1h-1zM550.3 459.5h1v1h-1zM550.5 418.8h1v1h-1zM550.6 251.5h1v1h-1zM550.4 188.1h1v1h-1zM550.7 318.8h1v1h-1zM550.8 319.1h1v1h-1zM550.6 235.3h1v1h-1zM550.6 391.2h1v1h-1zM550.9 237.4h1v1h-1zM551.3 382.0h1v1h-1zM550.8 307.2h1v1h-1zM551.4 236.1h1v1h-1zM550.9 315.6h1v1h-1zM551.2 486.8h1v1h-1zM551.8 400.0h1v1h-1zM552.0 518.1h1v1h-1zM552.1 188.2h1v1h-1zM552.1 498.1h1v1h-1zM551.8 352.4h1v1h-1zM552.6 328.1h1v1h-1zM552.3 226.8h1v1h-1zM552.7 512.0h1v1h-1zM552.8 484.7h1v1h-1zM552.2 519.8h1v1h-1zM553.1 309.9h1v1h-1zM552.3 187.1h1v1h-1zM552.9 514.1h1v1h-1zM552.7 328.7h1v1h-1zM552.6 391.6h1v1h-1zM553.2 521.8h1v1h-1zM552.9 460.7h1v1h-1zM553.6 510.2h1v1h-1zM553.4 328.9h1v1h-1zM553.3 185.4h1v1h-1zM553.1 298.3h1v1h-1zM553.9 191.5h1v1h-1zM553.9 208.7h1v1h-1zM554.2 296.4h1v1h-1zM553.9 526.8h1v1h-1zM554.5 317.8h1v1h-1zM553.7 473.7h1v1h-1zM554.7 446.4h1v1h-1zM554.7 188.8h1v1h-1zM554.1 515.1h1v1h-1zM555.1 424.9h1v1h-1zM554.3 274.2h1v1h-1zM555.1 257.7h1v1h-1zM554.6 202.0h1v1h-1zM555.2 298.2h1v1h-1zM555.4 521.8h1v1h-1zM554.8 254.2h1v1h-1zM555.1 196.0h1v1h-1zM555.8 194.3h1v1h-1zM555.5 181.0h1v1h-1zM555.3 331.6h1v1h-1zM555.3 518.1h1v1h-1zM555.4 198.1h1v1h-1zM555.5 471.7h1v1h-1zM555.9 286.7h1v1h-1zM556.4 427.7h1v1h-1zM556.2 495.6h1v1h-1zM555.9 302.7h1v1h-1zM556.3 190.9h1v1h-1zM556.5 236.1h1v1h-1zM556.5 186.9h1v1h-1zM556.8 408.8h1v1h-1zM557.0 370.1h1v1h-1zM557.1 359.6h1v1h-1zM557.0 524.1h1v1h-1zM556.6 341.4h1v1h-1zM557.5 535.1h1v1h-1zM557.6 184.7h1v1h-1zM557.6 183.0h1v1h-1zM557.4 367.4h1v1h-1zM558.0 327.9h1v1h-1zM557.3 408.3h1v1h-1zM558.0 177.3h1v1h-1zM558.0 467.1h1v1h-1zM558.2 367.5h1v1h-1zM557.7 480.1h1v1h-1zM558.7 517.3h1v1h-1zM557.8 319.5h1v1h-1zM558.1 515.0h1v1h-1zM558.5 287.2h1v1h-1zM558.7 446.5h1v1h-1zM558.4 295.5h1v1h-1zM558.6 424.6h1v1h-1zM559.3 274.3h1v1h-1zM558.8 301.1h1v1h-1zM559.0 347.2h1v1h-1zM558.8 243.6h1v1h-1zM559.4 182.0h1v1h-1zM559.6 546.5h1v1h-1zM559.7 385.2h1v1h-1zM559.3 387.6h1v1h-1zM559.6 174.5h1v1h-1zM560.0 390.2h1v1h-1zM560.4 174.2h1v1h-1zM560.3 550.2h1v1h-1zM559.8 550.6h1v1h-1zM559.8 550.9h1v1h-1zM560.1 551.2h1v1h-1zM560.4 551.5h1v1h-1zM560.3 551.7h1v1h-1zM560.9 396.0h1v1h-1zM560.5 173.3h1v1h-1zM560.4 397.1h1v1h-1zM561.0 173.1h1v1h-1zM561.3 552.9h1v1h-1zM560.8 554.2h1v1h-1zM561.0 172.3h1v1h-1zM561.1 404.3h1v1h-1zM560.9 391.2h1v1h-1zM561.7 174.0h1v1h-1zM561.2 174.1h1v1h-1zM561.8 557.0h1v1h-1zM561.9 174.5h1v1h-1zM561.9 384.7h1v1h-1zM561.5 548.0h1v1h-1zM561.6 553.5h1v1h-1zM562.2 386.1h1v1h-1zM562.3 559.0h1v1h-1zM561.9 404.3h1v1h-1zM562.0 416.2h1v1h-1zM562.9 560.4h1v1h-1zM562.5 557.2h1v1h-1zM563.0 384.0h1v1h-1zM562.6 277.9h1v1h-1zM562.8 377.4h1v1h-1zM563.5 227.9h1v1h-1zM562.9 299.7h1v1h-1zM563.2 536.4h1v1h-1zM563.4 386.9h1v1h-1zM563.7 558.6h1v1h-1zM563.4 528.9h1v1h-1zM563.8 240.9h1v1h-1zM563.5 552.1h1v1h-1zM564.1 210.1h1v1h-1zM563.5 497.3h1v1h-1zM563.8 169.1h1v1h-1zM563.8 341.5h1v1h-1zM563.9 560.3h1v1h-1zM564.6 567.6h1v1h-1zM564.5 260.3h1v1h-1zM564.9 381.9h1v1h-1zM565.2 560.3h1v1h-1zM564.5 397.3h1v1h-1zM565.2 570.3h1v1h-1zM565.5 190.9h1v1h-1zM564.9 198.4h1v1h-1zM564.8 552.0h1v1h-1zM565.3 204.6h1v1h-1zM565.4 330.9h1v1h-1zM565.7 526.8h1v1h-1zM565.7 337.4h1v1h-1zM565.5 389.9h1v1h-1zM565.5 415.7h1v1h-1zM565.7 335.8h1v1h-1zM566.0 254.3h1v1h-1zM565.8 494.4h1v1h-1zM566.0 344.8h1v1h-1zM566.7 165.9h1v1h-1zM566.3 232.0h1v1h-1zM566.1 400.3h1v1h-1zM566.8 180.0h1v1h-1zM566.6 459.6h1v1h-1zM566.8 441.1h1v1h-1zM566.8 294.8h1v1h-1zM566.6 420.6h1v1h-1zM567.3 165.7h1v1h-1zM567.3 164.4h1v1h-1zM567.8 214.8h1v1h-1zM566.9 195.3h1v1h-1zM567.6 163.4h1v1h-1zM567.5 562.4h1v1h-1zM567.6 459.2h1v1h-1zM568.0 180.4h1v1h-1zM567.6 185.3h1v1h-1zM567.9 229.8h1v1h-1zM567.7 392.9h1v1h-1zM568.3 384.8h1v1h-1zM568.2 422.0h1v1h-1zM567.9 177.8h1v1h-1zM568.2 564.0h1v1h-1zM568.5 584.0h1v1h-1zM568.7 586.0h1v1h-1zM568.4 433.6h1v1h-1zM569.0 163.2h1v1h-1zM569.3 339.0h1v1h-1zM568.9 163.4h1v1h-1zM568.8 335.7h1v1h-1zM568.9 227.3h1v1h-1zM569.7 300.7h1v1h-1zM569.5 493.0h1v1h-1zM569.2 455.5h1v1h-1zM569.4 312.4h1v1h-1zM570.1 344.7h1v1h-1zM570.1 313.9h1v1h-1zM570.2 371.4h1v1h-1zM569.7 338.1h1v1h-1zM570.7 182.8h1v1h-1zM570.1 503.0h1v1h-1zM570.3 444.5h1v1h-1zM570.2 500.0h1v1h-1zM571.0 484.1h1v1h-1zM570.8 579.2h1v1h-1zM570.9 397.1h1v1h-1zM570.8 563.6h1v1h-1zM571.2 240.1h1v1h-1zM571.1 211.2h1v1h-1zM571.2 344.3h1v1h-1zM571.0 365.9h1v1h-1zM571.7 299.0h1v1h-1zM571.1 300.3h1v1h-1zM572.0 584.1h1v1h-1zM572.1 159.1h1v1h-1zM571.8 449.9h1v1h-1zM571.6 497.0h1v1h-1zM571.7 163.1h1v1h-1zM571.7 253.1h1v1h-1zM572.4 527.5h1v1h-1zM572.2 368.5h1v1h-1zM572.9 578.0h1v1h-1zM572.3 290.2h1v1h-1zM572.4 233.8h1v1h-1zM572.9 324.0h1v1h-1zM573.2 344.2h1v1h-1zM572.9 157.1h1v1h-1zM572.6 603.5h1v1h-1zM572.8 154.8h1v1h-1zM573.4 203.1h1v1h-1zM573.6 498.9h1v1h-1zM573.9 357.7h1v1h-1zM573.6 276.3h1v1h-1zM573.9 594.1h1v1h-1zM573.9 372.8h1v1h-1zM573.8 304.4h1v1h-1zM574.2 448.7h1v1h-1zM573.7 320.6h1v1h-1zM573.8 375.0h1v1h-1zM574.0 610.3h1v1h-1zM574.2 611.0h1v1h-1zM574.8 395.6h1v1h-1zM574.8 557.3h1v1h-1zM574.8 374.5h1v1h-1zM575.1 570.0h1v1h-1zM574.7 461.6h1v1h-1zM575.4 370.6h1v1h-1zM575.4 180.8h1v1h-1zM574.8 230.0h1v1h-1zM575.1 370.7h1v1h-1zM575.1 571.8h1v1h-1zM575.1 396.3h1v1h-1zM575.9 504.5h1v1h-1zM575.5 555.7h1v1h-1zM576.1 211.3h1v1h-1zM575.9 532.7h1v1h-1zM575.5 258.2h1v1h-1zM575.9 393.3h1v1h-1zM576.4 448.3h1v1h-1zM576.0 360.4h1v1h-1zM576.1 230.4h1v1h-1zM576.0 494.7h1v1h-1zM576.5 470.1h1v1h-1zM577.0 584.7h1v1h-1zM576.2 408.9h1v1h-1zM577.2 316.9h1v1h-1zM577.0 166.0h1v1h-1zM576.8 548.3h1v1h-1zM577.5 509.5h1v1h-1zM577.6 496.5h1v1h-1zM577.8 624.4h1v1h-1zM577.4 541.7h1v1h-1zM577.4 483.3h1v1h-1zM577.8 619.7h1v1h-1zM578.1 445.6h1v1h-1zM577.6 594.6h1v1h-1zM577.7 551.8h1v1h-1zM577.9 148.6h1v1h-1zM577.6 163.7h1v1h-1zM578.5 419.4h1v1h-1zM578.3 474.0h1v1h-1zM578.4 389.6h1v1h-1zM578.6 180.1h1v1h-1zM578.9 434.2h1v1h-1zM578.9 270.6h1v1h-1zM578.6 609.9h1v1h-1zM578.7 520.6h1v1h-1zM578.8 332.0h1v1h-1zM579.1 462.7h1v1h-1zM579.5 482.1h1v1h-1zM578.8 549.6h1v1h-1zM579.5 460.1h1v1h-1zM579.8 626.5h1v1h-1zM579.7 524.6h1v1h-1zM579.6 630.1h1v1h-1zM579.8 189.3h1v1h-1zM579.9 313.8h1v1h-1zM580.1 539.7h1v1h-1zM579.7 613.4h1v1h-1zM580.5 479.3h1v1h-1zM580.4 533.6h1v1h-1zM580.9 575.9h1v1h-1zM580.5 509.1h1v1h-1zM536.8 355.7h1v1h-1zM536.4 239.4h1v1h-1zM536.7 210.1h1v1h-1zM536.5 379.9h1v1h-1zM536.7 421.0h1v1h-1zM536.8 217.3h1v1h-1zM536.7 399.9h1v1h-1zM537.5 376.8h1v1h-1zM537.3 208.4h1v1h-1zM537.2 211.9h1v1h-1zM537.6 217.2h1v1h-1zM537.3 207.5h1v1h-1zM537.6 254.6h1v1h-1zM537.9 447.6h1v1h-1zM538.0 428.3h1v1h-1zM537.9 219.0h1v1h-1zM538.3 210.4h1v1h-1zM538.6 208.9h1v1h-1zM538.8 252.3h1v1h-1zM538.5 243.3h1v1h-1zM539.0 229.8h1v1h-1zM539.0 341.5h1v1h-1zM538.9 238.3h1v1h-1zM538.4 242.7h1v1h-1zM539.0 207.4h1v1h-1zM539.0 215.2h1v1h-1zM539.3 470.9h1v1h-1zM539.0 207.5h1v1h-1zM539.8 230.2h1v1h-1zM539.2 475.1h1v1h-1zM540.0 212.3h1v1h-1zM539.4 449.3h1v1h-1zM539.7 475.8h1v1h-1zM540.0 204.9h1v1h-1zM539.7 211.8h1v1h-1zM539.9 338.0h1v1h-1zM540.3 242.9h1v1h-1zM540.5 470.2h1v1h-1zM540.7 208.3h1v1h-1zM540.5 476.7h1v1h-1zM541.0 479.0h1v1h-1zM540.4 390.7h1v1h-1zM540.8 269.9h1v1h-1zM541.1 240.1h1v1h-1zM540.5 238.9h1v1h-1zM541.3 269.5h1v1h-1zM541.4 202.9h1v1h-1zM541.3 386.7h1v1h-1zM541.7 327.7h1v1h-1zM541.6 203.8h1v1h-1zM541.4 224.0h1v1h-1zM541.9 223.3h1v1h-1zM541.7 319.6h1v1h-1zM542.0 391.9h1v1h-1zM542.4 260.0h1v1h-1zM542.2 207.8h1v1h-1zM542.4 483.9h1v1h-1zM542.5 354.9h1v1h-1zM542.0 312.3h1v1h-1zM541.9 453.1h1v1h-1zM542.1 480.6h1v1h-1zM542.6 226.7h1v1h-1zM543.2 246.8h1v1h-1zM542.7 314.9h1v1h-1zM543.3 248.8h1v1h-1zM542.8 371.4h1v1h-1zM542.7 374.4h1v1h-1zM543.1 276.7h1v1h-1zM543.6 270.5h1v1h-1zM543.9 459.7h1v1h-1zM543.5 257.2h1v1h-1zM543.5 327.4h1v1h-1zM544.0 489.2h1v1h-1zM543.7 490.1h1v1h-1zM543.7 337.7h1v1h-1zM544.3 210.3h1v1h-1zM543.7 197.7h1v1h-1zM544.5 279.9h1v1h-1zM544.8 470.5h1v1h-1zM544.0 197.8h1v1h-1zM544.8 455.6h1v1h-1zM544.1 266.3h1v1h-1zM544.3 230.9h1v1h-1zM544.6 269.2h1v1h-1zM545.4 196.5h1v1h-1zM544.6 259.4h1v1h-1zM545.1 281.4h1v1h-1zM545.1 429.6h1v1h-1zM545.0 263.3h1v1h-1zM545.9 483.1h1v1h-1zM545.2 377.7h1v1h-1zM546.0 472.3h1v1h-1zM545.7 282.9h1v1h-1zM546.0 411.2h1v1h-1zM546.1 474.9h1v1h-1zM546.2 414.8h1v1h-1zM546.4 380.9h1v1h-1zM546.6 293.8h1v1h-1zM545.9 243.1h1v1h-1zM546.0 426.5h1v1h-1zM546.5 379.4h1v1h-1zM546.2 197.3h1v1h-1zM546.8 352.6h1v1h-1zM547.2 498.6h1v1h-1zM546.9 214.6h1v1h-1zM546.7 294.5h1v1h-1zM546.7 298.3h1v1h-1zM547.2 293.0h1v1h-1zM547.5 465.0h1v1h-1zM547.7 285.1h1v1h-1zM547.8 200.5h1v1h-1zM547.6 330.0h1v1h-1zM548.1 301.5h1v1h-1zM547.8 243.2h1v1h-1zM548.1 495.8h1v1h-1zM547.5 440.7h1v1h-1zM548.1 504.2h1v1h-1zM547.8 197.8h1v1h-1zM548.0 454.9h1v1h-1zM548.2 233.2h1v1h-1zM548.6 207.5h1v1h-1zM548.2 215.6h1v1h-1zM548.9 271.3h1v1h-1zM548.7 190.8h1v1h-1zM548.6 243.9h1v1h-1zM549.5 344.4h1v1h-1zM549.3 292.0h1v1h-1zM549.0 248.0h1v1h-1zM548.9 193.9h1v1h-1zM549.4 454.8h1v1h-1zM549.8 193.8h1v1h-1zM549.6 222.8h1v1h-1zM549.5 339.2h1v1h-1zM549.4 288.3h1v1h-1zM549.6 508.1h1v1h-1zM550.3 223.6h1v1h-1zM549.8 240.0h1v1h-1zM550.7 230.5h1v1h-1zM550.5 195.4h1v1h-1zM550.3 354.2h1v1h-1zM550.2 513.8h1v1h-1zM550.6 234.8h1v1h-1zM551.2 234.2h1v1h-1zM550.4 391.2h1v1h-1zM550.6 187.5h1v1h-1zM550.6 386.1h1v1h-1zM551.3 188.0h1v1h-1zM551.7 249.7h1v1h-1zM551.4 388.9h1v1h-1zM551.2 237.8h1v1h-1zM552.0 267.6h1v1h-1zM551.7 187.2h1v1h-1zM552.2 325.8h1v1h-1zM551.7 513.1h1v1h-1zM551.5 286.7h1v1h-1zM551.6 199.5h1v1h-1zM551.9 221.6h1v1h-1zM552.1 411.0h1v1h-1zM552.6 312.9h1v1h-1zM552.4 263.2h1v1h-1zM552.3 328.5h1v1h-1zM553.0 244.1h1v1h-1zM552.8 515.8h1v1h-1zM552.9 316.5h1v1h-1zM553.2 219.8h1v1h-1zM553.2 184.4h1v1h-1zM552.8 332.2h1v1h-1zM553.7 227.9h1v1h-1zM553.0 308.2h1v1h-1zM553.1 218.9h1v1h-1zM553.6 520.0h1v1h-1zM553.7 260.4h1v1h-1zM553.4 503.1h1v1h-1zM554.0 456.3h1v1h-1zM553.5 263.2h1v1h-1zM554.0 342.2h1v1h-1zM554.5 231.4h1v1h-1zM554.6 244.0h1v1h-1zM554.4 210.3h1v1h-1zM554.7 510.2h1v1h-1zM554.7 316.7h1v1h-1zM554.3 192.6h1v1h-1zM555.1 302.2h1v1h-1zM554.9 336.3h1v1h-1zM555.0 473.8h1v1h-1zM555.5 258.8h1v1h-1zM555.2 330.1h1v1h-1zM555.0 343.6h1v1h-1zM555.2 490.0h1v1h-1zM555.5 494.6h1v1h-1zM555.9 531.7h1v1h-1zM555.9 212.9h1v1h-1zM555.6 321.7h1v1h-1zM555.8 483.9h1v1h-1zM555.4 238.9h1v1h-1zM556.1 277.2h1v1h-1zM556.4 192.2h1v1h-1zM555.9 277.2h1v1h-1zM556.4 250.0h1v1h-1zM556.0 503.6h1v1h-1zM556.8 384.8h1v1h-1zM556.8 514.8h1v1h-1zM557.1 181.8h1v1h-1zM556.6 182.9h1v1h-1zM556.6 187.8h1v1h-1zM557.1 333.4h1v1h-1zM556.7 201.1h1v1h-1zM557.5 357.9h1v1h-1zM557.0 520.6h1v1h-1zM557.0 525.3h1v1h-1zM557.1 183.0h1v1h-1zM557.8 214.3h1v1h-1zM557.2 180.2h1v1h-1zM557.7 541.4h1v1h-1zM557.6 229.9h1v1h-1zM558.3 182.2h1v1h-1zM557.7 248.8h1v1h-1zM557.9 317.4h1v1h-1zM558.6 223.5h1v1h-1zM558.4 312.4h1v1h-1zM558.1 273.5h1v1h-1zM559.1 204.5h1v1h-1zM558.6 258.7h1v1h-1zM558.7 186.2h1v1h-1zM559.1 297.5h1v1h-1zM559.0 249.3h1v1h-1zM559.4 193.3h1v1h-1zM559.2 364.3h1v1h-1zM559.0 527.6h1v1h-1zM559.4 383.3h1v1h-1zM559.8 175.1h1v1h-1zM559.4 174.8h1v1h-1zM559.8 548.9h1v1h-1zM559.9 174.4h1v1h-1zM560.1 549.8h1v1h-1zM559.9 392.1h1v1h-1zM559.8 392.8h1v1h-1zM560.4 393.6h1v1h-1zM560.6 394.2h1v1h-1zM560.4 394.9h1v1h-1zM560.1 395.5h1v1h-1zM560.9 173.4h1v1h-1zM560.7 552.2h1v1h-1zM561.0 173.2h1v1h-1zM560.5 552.7h1v1h-1zM561.3 398.1h1v1h-1zM561.0 401.2h1v1h-1zM561.6 554.9h1v1h-1zM561.0 173.8h1v1h-1zM560.9 172.0h1v1h-1zM561.3 550.0h1v1h-1zM561.8 549.7h1v1h-1zM561.9 407.9h1v1h-1zM562.1 548.5h1v1h-1zM561.6 171.6h1v1h-1zM562.1 384.9h1v1h-1zM561.7 398.7h1v1h-1zM561.9 171.0h1v1h-1zM561.8 412.8h1v1h-1zM562.5 172.1h1v1h-1zM562.9 176.3h1v1h-1zM562.7 416.3h1v1h-1zM562.8 407.8h1v1h-1zM563.2 170.4h1v1h-1zM562.7 285.9h1v1h-1zM563.1 171.4h1v1h-1zM563.4 399.9h1v1h-1zM562.9 246.3h1v1h-1zM563.5 355.6h1v1h-1zM563.0 169.2h1v1h-1zM563.4 410.8h1v1h-1zM563.3 337.8h1v1h-1zM563.6 367.1h1v1h-1zM563.5 393.8h1v1h-1zM563.5 446.7h1v1h-1zM563.9 271.4h1v1h-1zM564.0 563.7h1v1h-1zM564.4 191.1h1v1h-1zM563.8 414.6h1v1h-1zM564.5 434.2h1v1h-1zM564.0 321.1h1v1h-1zM564.6 168.0h1v1h-1zM564.2 414.3h1v1h-1zM565.2 167.3h1v1h-1zM564.9 441.0h1v1h-1zM565.0 499.9h1v1h-1zM564.7 478.4h1v1h-1zM565.5 392.6h1v1h-1zM565.1 461.0h1v1h-1zM565.4 200.2h1v1h-1zM565.7 331.1h1v1h-1zM565.9 193.0h1v1h-1zM565.6 165.6h1v1h-1zM565.4 171.2h1v1h-1zM566.4 194.2h1v1h-1zM565.8 333.1h1v1h-1zM565.6 263.4h1v1h-1zM566.3 185.3h1v1h-1zM566.7 572.7h1v1h-1zM566.0 386.9h1v1h-1zM566.0 165.2h1v1h-1zM566.8 530.8h1v1h-1zM566.8 208.4h1v1h-1zM566.6 187.8h1v1h-1zM566.7 250.0h1v1h-1zM567.3 172.0h1v1h-1zM566.6 573.1h1v1h-1zM566.9 576.9h1v1h-1zM567.2 431.6h1v1h-1zM567.7 486.2h1v1h-1zM567.3 579.9h1v1h-1zM567.2 418.1h1v1h-1zM567.9 206.5h1v1h-1zM568.0 529.4h1v1h-1zM567.5 515.0h1v1h-1zM568.2 391.3h1v1h-1zM568.2 162.1h1v1h-1zM568.1 162.3h1v1h-1zM568.4 170.9h1v1h-1zM568.4 536.9h1v1h-1zM568.8 421.8h1v1h-1zM569.1 477.2h1v1h-1zM568.5 483.1h1v1h-1zM568.4 178.3h1v1h-1zM568.8 580.4h1v1h-1zM569.1 186.7h1v1h-1zM568.9 579.7h1v1h-1zM568.9 189.8h1v1h-1zM569.0 397.0h1v1h-1zM569.7 237.0h1v1h-1zM569.7 256.9h1v1h-1zM569.2 199.4h1v1h-1zM569.5 218.4h1v1h-1zM569.6 180.2h1v1h-1zM569.5 215.9h1v1h-1zM570.3 163.0h1v1h-1zM569.9 186.0h1v1h-1zM570.3 521.4h1v1h-1zM570.2 275.1h1v1h-1zM570.0 186.1h1v1h-1zM570.0 269.0h1v1h-1zM570.8 239.9h1v1h-1zM570.8 462.5h1v1h-1zM570.8 158.4h1v1h-1zM570.6 418.9h1v1h-1zM570.8 362.7h1v1h-1zM571.1 439.1h1v1h-1zM570.9 178.6h1v1h-1zM571.4 163.5h1v1h-1zM571.7 237.3h1v1h-1zM571.2 235.0h1v1h-1zM572.0 475.9h1v1h-1zM571.7 592.4h1v1h-1zM572.3 189.9h1v1h-1zM572.4 261.6h1v1h-1zM571.6 579.9h1v1h-1zM572.3 330.1h1v1h-1zM571.9 326.2h1v1h-1zM572.4 160.8h1v1h-1zM572.8 458.1h1v1h-1zM572.5 251.5h1v1h-1zM572.8 377.3h1v1h-1zM572.9 198.5h1v1h-1zM572.5 176.5h1v1h-1zM572.8 598.3h1v1h-1zM572.8 532.7h1v1h-1zM573.1 605.3h1v1h-1zM573.5 460.8h1v1h-1zM572.9 263.7h1v1h-1zM573.5 165.1h1v1h-1zM573.5 277.5h1v1h-1zM573.5 504.5h1v1h-1zM574.0 157.0h1v1h-1zM573.7 225.4h1v1h-1zM574.2 185.7h1v1h-1zM573.6 201.2h1v1h-1zM574.0 155.7h1v1h-1zM573.8 552.9h1v1h-1zM574.6 554.8h1v1h-1zM574.6 152.9h1v1h-1zM574.2 399.6h1v1h-1zM574.5 155.1h1v1h-1zM574.3 434.2h1v1h-1zM575.2 200.2h1v1h-1zM575.3 156.1h1v1h-1zM575.4 525.5h1v1h-1zM575.2 385.4h1v1h-1zM575.0 155.6h1v1h-1zM575.3 438.8h1v1h-1zM575.6 151.5h1v1h-1zM575.4 272.3h1v1h-1zM575.2 394.4h1v1h-1zM575.7 436.1h1v1h-1zM575.4 335.3h1v1h-1zM575.6 314.6h1v1h-1zM576.3 150.4h1v1h-1zM576.2 182.1h1v1h-1zM576.5 159.3h1v1h-1zM576.5 383.3h1v1h-1zM576.6 251.9h1v1h-1zM576.2 210.0h1v1h-1zM576.8 475.2h1v1h-1zM576.3 152.4h1v1h-1zM576.3 202.6h1v1h-1zM576.7 570.1h1v1h-1zM576.7 373.7h1v1h-1zM577.3 281.0h1v1h-1zM577.0 254.5h1v1h-1zM576.8 595.4h1v1h-1zM577.7 356.2h1v1h-1zM577.9 230.0h1v1h-1zM577.8 580.9h1v1h-1zM578.2 177.0h1v1h-1zM578.1 504.1h1v1h-1zM578.3 382.3h1v1h-1zM578.2 624.1h1v1h-1zM578.4 576.9h1v1h-1zM578.5 155.0h1v1h-1zM577.9 213.7h1v1h-1zM578.2 146.8h1v1h-1zM578.6 526.7h1v1h-1zM578.4 164.8h1v1h-1zM579.1 283.9h1v1h-1zM578.4 550.4h1v1h-1zM578.5 303.8h1v1h-1zM578.8 180.2h1v1h-1zM578.9 195.9h1v1h-1zM579.5 225.8h1v1h-1zM578.8 375.2h1v1h-1zM579.7 192.0h1v1h-1zM580.0 601.6h1v1h-1zM579.1 312.2h1v1h-1zM580.2 613.1h1v1h-1zM580.0 498.3h1v1h-1zM579.5 203.0h1v1h-1zM580.3 348.9h1v1h-1zM579.7 560.7h1v1h-1zM580.1 219.8h1v1h-1zM580.0 333.3h1v1h-1zM580.1 447.5h1v1h-1zM580.5 276.5h1v1h-1zM536.6 219.7h1v1h-1zM536.6 393.5h1v1h-1zM536.7 463.0h1v1h-1zM537.2 209.5h1v1h-1zM537.3 216.0h1v1h-1zM536.6 445.2h1v1h-1zM537.3 208.6h1v1h-1zM537.5 209.6h1v1h-1zM537.7 466.8h1v1h-1zM537.3 458.2h1v1h-1zM537.9 445.0h1v1h-1zM537.7 469.0h1v1h-1zM537.7 359.6h1v1h-1zM537.8 234.5h1v1h-1zM537.8 218.8h1v1h-1zM538.2 440.4h1v1h-1zM538.1 461.4h1v1h-1zM538.6 465.2h1v1h-1zM538.3 363.9h1v1h-1zM538.0 383.1h1v1h-1zM538.2 414.0h1v1h-1zM538.5 227.1h1v1h-1zM538.7 394.3h1v1h-1zM539.1 384.3h1v1h-1zM539.0 468.5h1v1h-1zM538.7 449.0h1v1h-1zM538.9 259.6h1v1h-1zM539.2 468.1h1v1h-1zM539.6 412.5h1v1h-1zM539.6 265.0h1v1h-1zM539.6 455.9h1v1h-1zM539.4 233.6h1v1h-1zM539.8 265.6h1v1h-1zM539.5 474.3h1v1h-1zM539.5 456.8h1v1h-1zM540.3 228.2h1v1h-1zM540.3 382.6h1v1h-1zM540.7 257.2h1v1h-1zM540.5 465.5h1v1h-1zM540.2 266.0h1v1h-1zM540.0 269.2h1v1h-1zM540.5 202.8h1v1h-1zM540.5 325.7h1v1h-1zM540.8 388.3h1v1h-1zM540.8 391.1h1v1h-1zM540.5 326.1h1v1h-1zM540.7 478.9h1v1h-1zM541.1 202.1h1v1h-1zM541.4 236.7h1v1h-1zM541.1 476.4h1v1h-1zM541.2 425.7h1v1h-1zM541.3 427.2h1v1h-1zM541.9 245.6h1v1h-1zM542.1 201.0h1v1h-1zM541.9 344.2h1v1h-1zM541.6 465.8h1v1h-1zM542.5 274.5h1v1h-1zM542.6 212.0h1v1h-1zM542.1 254.1h1v1h-1zM541.9 233.7h1v1h-1zM542.5 269.1h1v1h-1zM542.3 418.4h1v1h-1zM542.6 371.8h1v1h-1zM542.7 250.1h1v1h-1zM542.7 367.1h1v1h-1zM543.4 202.6h1v1h-1zM543.0 201.6h1v1h-1zM542.8 310.1h1v1h-1zM543.4 321.7h1v1h-1zM543.8 239.8h1v1h-1zM543.2 348.5h1v1h-1zM543.6 234.0h1v1h-1zM543.6 281.0h1v1h-1zM544.0 282.4h1v1h-1zM543.7 223.0h1v1h-1zM543.8 458.2h1v1h-1zM544.6 490.9h1v1h-1zM544.5 303.1h1v1h-1zM544.5 252.3h1v1h-1zM544.6 490.4h1v1h-1zM544.9 233.6h1v1h-1zM544.2 328.7h1v1h-1zM544.6 406.6h1v1h-1zM544.9 322.8h1v1h-1zM544.5 493.6h1v1h-1zM545.5 342.3h1v1h-1zM545.3 299.3h1v1h-1zM545.5 209.2h1v1h-1zM545.8 334.1h1v1h-1zM545.5 269.2h1v1h-1zM545.9 197.1h1v1h-1zM545.5 253.1h1v1h-1zM546.1 295.9h1v1h-1zM545.8 198.7h1v1h-1zM546.2 256.4h1v1h-1zM545.8 199.8h1v1h-1zM546.1 195.6h1v1h-1zM546.3 276.8h1v1h-1zM546.3 376.8h1v1h-1zM546.8 205.4h1v1h-1zM546.5 195.3h1v1h-1zM547.0 490.7h1v1h-1zM546.3 207.0h1v1h-1zM546.5 293.5h1v1h-1zM546.6 445.4h1v1h-1zM546.7 274.6h1v1h-1zM547.2 268.4h1v1h-1zM546.8 276.9h1v1h-1zM547.5 241.2h1v1h-1zM547.8 290.1h1v1h-1zM547.9 481.6h1v1h-1zM547.2 225.6h1v1h-1zM547.4 262.7h1v1h-1zM547.7 375.4h1v1h-1zM547.4 287.3h1v1h-1zM548.2 213.9h1v1h-1zM548.1 302.3h1v1h-1zM548.1 488.6h1v1h-1zM548.0 227.6h1v1h-1zM548.0 398.3h1v1h-1zM548.9 462.7h1v1h-1zM548.7 441.6h1v1h-1zM548.5 314.4h1v1h-1zM549.2 507.3h1v1h-1zM548.5 372.7h1v1h-1zM548.9 210.0h1v1h-1zM548.7 276.2h1v1h-1zM549.5 363.1h1v1h-1zM549.7 498.6h1v1h-1zM549.2 226.1h1v1h-1zM549.8 498.7h1v1h-1zM550.1 422.8h1v1h-1zM549.4 213.5h1v1h-1zM550.3 281.8h1v1h-1zM549.7 307.6h1v1h-1zM550.2 420.6h1v1h-1zM550.1 380.7h1v1h-1zM550.0 403.4h1v1h-1zM550.4 494.1h1v1h-1zM549.9 200.6h1v1h-1zM550.5 318.3h1v1h-1zM550.6 392.7h1v1h-1zM550.8 394.0h1v1h-1zM551.1 187.7h1v1h-1zM551.3 515.2h1v1h-1zM551.3 187.6h1v1h-1zM551.5 513.9h1v1h-1zM551.1 357.4h1v1h-1zM550.9 187.0h1v1h-1zM551.6 384.9h1v1h-1zM551.0 318.8h1v1h-1zM552.1 515.8h1v1h-1zM551.7 224.7h1v1h-1zM551.6 315.5h1v1h-1zM551.4 282.0h1v1h-1zM552.3 482.1h1v1h-1zM552.4 424.1h1v1h-1zM551.8 189.2h1v1h-1zM552.6 240.3h1v1h-1zM552.0 327.1h1v1h-1zM552.7 220.6h1v1h-1zM552.6 368.9h1v1h-1zM552.8 320.0h1v1h-1zM552.4 234.8h1v1h-1zM553.2 428.1h1v1h-1zM553.3 523.0h1v1h-1zM553.4 215.8h1v1h-1zM553.1 407.5h1v1h-1zM553.1 245.7h1v1h-1zM553.4 430.0h1v1h-1zM553.7 328.1h1v1h-1zM553.9 331.8h1v1h-1zM553.6 293.9h1v1h-1zM553.9 221.8h1v1h-1zM554.0 325.5h1v1h-1zM554.1 204.8h1v1h-1zM554.3 398.2h1v1h-1zM554.0 367.8h1v1h-1zM554.0 451.8h1v1h-1zM554.2 306.9h1v1h-1zM554.8 232.2h1v1h-1zM555.1 499.7h1v1h-1zM554.5 252.9h1v1h-1zM555.0 209.2h1v1h-1zM555.0 243.3h1v1h-1zM555.4 333.8h1v1h-1zM554.6 215.2h1v1h-1zM555.3 201.8h1v1h-1zM555.7 268.4h1v1h-1zM555.9 276.3h1v1h-1zM555.4 351.6h1v1h-1zM555.6 444.2h1v1h-1zM556.0 224.3h1v1h-1zM556.2 257.7h1v1h-1zM555.6 378.3h1v1h-1zM556.4 294.9h1v1h-1zM555.7 500.1h1v1h-1zM555.8 294.8h1v1h-1zM555.8 352.0h1v1h-1zM556.0 291.9h1v1h-1zM556.1 179.6h1v1h-1zM556.3 313.9h1v1h-1zM556.5 529.0h1v1h-1zM557.3 526.0h1v1h-1zM557.2 512.0h1v1h-1zM556.6 209.1h1v1h-1zM556.8 475.1h1v1h-1zM557.4 188.4h1v1h-1zM557.4 325.4h1v1h-1zM557.3 335.6h1v1h-1zM557.4 525.5h1v1h-1zM557.8 439.3h1v1h-1zM557.7 533.2h1v1h-1zM558.0 372.3h1v1h-1zM557.4 398.8h1v1h-1zM557.6 527.5h1v1h-1zM557.8 353.1h1v1h-1zM558.3 226.4h1v1h-1zM558.4 414.7h1v1h-1zM558.8 233.0h1v1h-1zM558.9 299.6h1v1h-1zM558.9 465.0h1v1h-1zM558.5 330.3h1v1h-1zM558.4 515.7h1v1h-1zM559.3 255.2h1v1h-1zM559.4 351.3h1v1h-1zM558.6 495.6h1v1h-1zM558.7 181.9h1v1h-1zM559.0 338.9h1v1h-1zM559.3 175.5h1v1h-1zM559.7 547.3h1v1h-1zM559.6 548.3h1v1h-1zM559.9 389.1h1v1h-1zM560.1 549.4h1v1h-1zM559.6 391.2h1v1h-1zM559.8 174.1h1v1h-1zM560.6 173.9h1v1h-1zM560.2 173.8h1v1h-1zM560.3 173.7h1v1h-1zM560.5 173.6h1v1h-1zM560.5 173.5h1v1h-1zM560.8 552.0h1v1h-1zM561.1 396.6h1v1h-1zM560.9 552.5h1v1h-1zM561.0 397.6h1v1h-1zM561.1 173.0h1v1h-1zM560.8 173.4h1v1h-1zM561.5 403.0h1v1h-1zM561.0 550.7h1v1h-1zM561.2 555.9h1v1h-1zM561.3 390.2h1v1h-1zM561.6 389.4h1v1h-1zM562.0 174.2h1v1h-1zM561.7 386.4h1v1h-1zM562.0 556.8h1v1h-1zM561.9 171.4h1v1h-1zM562.0 171.5h1v1h-1zM562.7 558.5h1v1h-1zM562.4 175.1h1v1h-1zM561.9 555.2h1v1h-1zM562.9 543.0h1v1h-1zM562.6 176.2h1v1h-1zM563.2 172.7h1v1h-1zM562.4 560.2h1v1h-1zM563.4 270.8h1v1h-1zM563.2 557.2h1v1h-1zM563.2 170.2h1v1h-1zM563.2 354.4h1v1h-1zM563.8 181.1h1v1h-1zM563.7 563.6h1v1h-1zM563.5 172.6h1v1h-1zM563.5 195.4h1v1h-1zM563.6 174.0h1v1h-1zM563.8 168.5h1v1h-1zM563.6 197.4h1v1h-1zM563.7 297.9h1v1h-1zM564.3 423.9h1v1h-1zM564.5 499.7h1v1h-1zM564.7 172.9h1v1h-1zM564.1 185.1h1v1h-1zM564.3 213.3h1v1h-1zM564.3 566.7h1v1h-1zM564.8 172.2h1v1h-1zM564.6 568.8h1v1h-1zM564.7 190.3h1v1h-1zM564.6 275.0h1v1h-1zM565.4 237.3h1v1h-1zM565.6 166.4h1v1h-1zM564.9 212.1h1v1h-1zM565.4 473.3h1v1h-1zM565.8 199.9h1v1h-1zM566.0 493.5h1v1h-1zM565.6 573.6h1v1h-1zM565.4 557.0h1v1h-1zM566.2 489.9h1v1h-1zM566.2 197.0h1v1h-1zM566.0 312.5h1v1h-1zM566.7 515.6h1v1h-1zM566.5 446.8h1v1h-1zM566.5 164.7h1v1h-1zM566.6 574.6h1v1h-1zM566.2 339.4h1v1h-1zM567.2 449.7h1v1h-1zM567.3 508.1h1v1h-1zM566.6 342.3h1v1h-1zM567.3 554.3h1v1h-1zM567.2 447.5h1v1h-1zM567.1 457.9h1v1h-1zM567.4 178.9h1v1h-1zM567.0 247.3h1v1h-1zM567.4 466.2h1v1h-1zM567.4 169.8h1v1h-1zM567.9 454.3h1v1h-1zM567.8 334.8h1v1h-1zM567.4 302.5h1v1h-1zM567.8 162.2h1v1h-1zM568.0 583.8h1v1h-1zM568.1 583.1h1v1h-1zM568.6 557.2h1v1h-1zM568.7 352.1h1v1h-1zM569.0 170.5h1v1h-1zM569.0 231.0h1v1h-1zM568.7 240.4h1v1h-1zM568.9 535.1h1v1h-1zM569.0 466.8h1v1h-1zM569.0 510.4h1v1h-1zM568.6 464.9h1v1h-1zM568.8 501.2h1v1h-1zM569.6 160.6h1v1h-1zM569.7 372.0h1v1h-1zM569.3 323.9h1v1h-1zM569.3 473.4h1v1h-1zM569.8 420.5h1v1h-1zM570.1 529.2h1v1h-1zM569.5 426.9h1v1h-1zM570.2 580.7h1v1h-1zM569.8 512.0h1v1h-1zM570.0 314.2h1v1h-1zM570.2 283.3h1v1h-1zM570.1 511.7h1v1h-1zM570.7 296.0h1v1h-1zM570.2 363.6h1v1h-1zM570.7 206.9h1v1h-1zM571.0 594.5h1v1h-1zM571.2 165.4h1v1h-1zM571.1 165.6h1v1h-1zM570.7 179.8h1v1h-1zM571.5 533.4h1v1h-1zM571.7 579.0h1v1h-1zM570.9 369.4h1v1h-1zM571.9 375.3h1v1h-1zM571.7 225.2h1v1h-1zM571.8 500.0h1v1h-1zM571.7 499.9h1v1h-1zM571.6 310.7h1v1h-1zM572.1 463.9h1v1h-1zM572.5 191.9h1v1h-1zM571.7 196.4h1v1h-1zM572.4 586.9h1v1h-1zM572.5 198.8h1v1h-1zM572.9 333.5h1v1h-1zM572.1 157.2h1v1h-1zM572.6 474.3h1v1h-1zM572.4 539.4h1v1h-1zM572.7 517.2h1v1h-1zM573.4 337.9h1v1h-1zM572.8 538.0h1v1h-1zM573.1 201.3h1v1h-1zM573.6 304.7h1v1h-1zM573.6 573.7h1v1h-1zM573.9 275.0h1v1h-1zM573.2 274.4h1v1h-1zM573.3 598.3h1v1h-1zM573.5 398.6h1v1h-1zM573.9 511.5h1v1h-1zM574.2 465.9h1v1h-1zM573.7 602.3h1v1h-1zM574.3 387.9h1v1h-1zM574.0 392.8h1v1h-1zM574.9 610.9h1v1h-1zM574.6 153.3h1v1h-1zM574.2 604.1h1v1h-1zM575.0 170.4h1v1h-1zM574.8 468.4h1v1h-1zM575.2 601.1h1v1h-1zM575.0 319.0h1v1h-1zM575.5 152.0h1v1h-1zM575.0 602.5h1v1h-1zM575.8 173.6h1v1h-1zM574.9 615.2h1v1h-1zM575.4 283.5h1v1h-1zM575.3 151.1h1v1h-1zM576.2 170.6h1v1h-1zM575.3 181.0h1v1h-1zM575.7 207.0h1v1h-1zM575.9 618.6h1v1h-1zM575.7 521.2h1v1h-1zM576.6 590.9h1v1h-1zM576.6 150.5h1v1h-1zM576.4 328.8h1v1h-1zM576.4 439.2h1v1h-1zM576.3 217.7h1v1h-1zM576.4 612.2h1v1h-1zM576.7 460.2h1v1h-1zM577.0 433.2h1v1h-1zM577.4 151.9h1v1h-1zM576.8 263.8h1v1h-1zM577.6 321.9h1v1h-1zM577.5 506.6h1v1h-1zM577.1 160.3h1v1h-1zM577.0 383.7h1v1h-1zM577.1 463.7h1v1h-1zM578.2 536.3h1v1h-1zM577.5 269.0h1v1h-1zM577.5 148.3h1v1h-1zM578.2 594.6h1v1h-1zM577.9 451.9h1v1h-1zM578.6 604.0h1v1h-1zM578.5 427.9h1v1h-1zM578.8 629.6h1v1h-1zM578.7 318.2h1v1h-1zM578.8 573.5h1v1h-1zM578.7 256.3h1v1h-1zM578.7 377.7h1v1h-1zM579.2 220.0h1v1h-1zM578.7 526.0h1v1h-1zM578.7 478.8h1v1h-1zM579.6 393.6h1v1h-1zM579.2 148.0h1v1h-1zM579.5 490.3h1v1h-1zM579.4 524.9h1v1h-1zM579.8 205.8h1v1h-1zM580.0 560.1h1v1h-1zM579.5 255.0h1v1h-1zM580.2 457.5h1v1h-1zM579.8 162.1h1v1h-1zM580.2 404.9h1v1h-1zM580.2 409.3h1v1h-1zM580.6 177.0h1v1h-1zM580.8 175.1h1v1h-1zM581.0 269.3h1v1h-1zM536.6 439.6h1v1h-1zM536.9 208.8h1v1h-1zM537.1 252.7h1v1h-1zM536.5 464.5h1v1h-1zM536.9 448.3h1v1h-1zM537.4 233.3h1v1h-1zM537.4 466.5h1v1h-1zM537.5 464.0h1v1h-1zM537.4 256.6h1v1h-1zM537.3 246.1h1v1h-1zM537.8 232.4h1v1h-1zM537.4 259.0h1v1h-1zM537.8 215.7h1v1h-1zM537.5 403.7h1v1h-1zM537.8 440.8h1v1h-1zM537.9 227.6h1v1h-1zM537.7 248.9h1v1h-1zM537.8 253.4h1v1h-1zM538.7 212.6h1v1h-1zM538.9 206.6h1v1h-1zM538.2 210.4h1v1h-1zM538.5 420.5h1v1h-1zM538.9 205.7h1v1h-1zM538.4 205.9h1v1h-1zM538.5 256.6h1v1h-1zM539.4 234.2h1v1h-1zM538.9 347.7h1v1h-1zM539.7 255.8h1v1h-1zM539.3 208.7h1v1h-1zM539.5 336.7h1v1h-1zM539.5 240.7h1v1h-1zM539.6 404.3h1v1h-1zM539.5 335.1h1v1h-1zM539.9 263.3h1v1h-1zM539.8 241.1h1v1h-1zM540.3 416.7h1v1h-1zM539.9 204.1h1v1h-1zM539.9 351.7h1v1h-1zM540.7 251.0h1v1h-1zM540.4 333.7h1v1h-1zM540.2 327.3h1v1h-1zM540.9 479.4h1v1h-1zM540.5 239.7h1v1h-1zM541.0 202.5h1v1h-1zM541.1 202.3h1v1h-1zM540.8 238.9h1v1h-1zM541.2 268.2h1v1h-1zM541.2 480.9h1v1h-1zM540.8 395.7h1v1h-1zM541.9 264.3h1v1h-1zM541.3 212.0h1v1h-1zM541.5 212.8h1v1h-1zM542.1 375.3h1v1h-1zM542.0 483.3h1v1h-1zM541.6 220.2h1v1h-1zM542.1 249.1h1v1h-1zM541.6 315.4h1v1h-1zM542.4 455.0h1v1h-1zM542.4 356.1h1v1h-1zM542.6 401.9h1v1h-1zM542.6 325.4h1v1h-1zM542.5 206.4h1v1h-1zM542.9 203.0h1v1h-1zM542.8 364.4h1v1h-1zM543.1 204.5h1v1h-1zM542.5 478.4h1v1h-1zM542.9 481.2h1v1h-1zM542.9 255.9h1v1h-1zM543.3 240.8h1v1h-1zM543.5 386.9h1v1h-1zM543.2 214.5h1v1h-1zM544.0 400.2h1v1h-1zM543.6 301.7h1v1h-1zM543.3 299.1h1v1h-1zM544.1 426.3h1v1h-1zM543.6 237.3h1v1h-1zM543.6 283.3h1v1h-1zM544.0 264.6h1v1h-1zM544.3 358.1h1v1h-1zM544.1 282.2h1v1h-1zM544.3 400.3h1v1h-1zM544.2 231.1h1v1h-1zM544.6 198.8h1v1h-1zM545.1 237.6h1v1h-1zM544.7 287.0h1v1h-1zM545.1 217.4h1v1h-1zM544.8 269.3h1v1h-1zM544.8 460.3h1v1h-1zM545.1 224.6h1v1h-1zM544.9 322.0h1v1h-1zM545.5 491.7h1v1h-1zM545.8 355.3h1v1h-1zM545.6 273.9h1v1h-1zM545.5 487.3h1v1h-1zM545.7 347.8h1v1h-1zM546.3 484.3h1v1h-1zM545.8 495.5h1v1h-1zM546.0 306.7h1v1h-1zM546.5 196.2h1v1h-1zM546.1 469.5h1v1h-1zM546.9 496.2h1v1h-1zM546.3 280.1h1v1h-1zM546.2 465.1h1v1h-1zM546.7 276.5h1v1h-1zM546.9 219.7h1v1h-1zM547.1 309.8h1v1h-1zM546.9 321.9h1v1h-1zM547.5 305.3h1v1h-1zM547.6 380.3h1v1h-1zM547.4 281.4h1v1h-1zM547.8 264.4h1v1h-1zM547.9 417.2h1v1h-1zM547.4 332.8h1v1h-1zM547.4 194.3h1v1h-1zM547.5 285.6h1v1h-1zM547.6 446.5h1v1h-1zM548.4 261.0h1v1h-1zM548.1 274.6h1v1h-1zM547.9 411.8h1v1h-1zM548.4 191.7h1v1h-1zM548.3 236.6h1v1h-1zM548.1 213.8h1v1h-1zM548.6 242.9h1v1h-1zM549.1 307.3h1v1h-1zM549.1 193.6h1v1h-1zM549.5 455.9h1v1h-1zM549.1 304.5h1v1h-1zM549.7 197.1h1v1h-1zM549.2 290.5h1v1h-1zM549.4 414.8h1v1h-1zM549.7 290.6h1v1h-1zM549.6 198.5h1v1h-1zM549.4 446.3h1v1h-1zM550.0 293.3h1v1h-1zM550.3 250.8h1v1h-1zM549.9 196.7h1v1h-1zM550.0 189.7h1v1h-1zM550.0 189.9h1v1h-1zM550.5 281.5h1v1h-1zM550.4 480.0h1v1h-1zM550.2 235.5h1v1h-1zM551.0 188.0h1v1h-1zM550.2 187.9h1v1h-1zM551.1 514.9h1v1h-1zM551.3 320.8h1v1h-1zM550.6 515.0h1v1h-1zM550.6 317.9h1v1h-1zM551.3 197.4h1v1h-1zM551.4 516.6h1v1h-1zM551.1 187.1h1v1h-1zM551.4 233.5h1v1h-1zM551.2 321.2h1v1h-1zM551.6 416.5h1v1h-1zM551.8 237.5h1v1h-1zM552.3 290.5h1v1h-1zM551.9 259.5h1v1h-1zM551.8 195.6h1v1h-1zM552.7 510.1h1v1h-1zM552.4 378.1h1v1h-1zM552.0 222.3h1v1h-1zM552.1 426.4h1v1h-1zM552.5 189.5h1v1h-1zM552.4 230.4h1v1h-1zM552.7 390.9h1v1h-1zM552.7 197.1h1v1h-1zM553.4 335.0h1v1h-1zM553.4 438.4h1v1h-1zM553.4 186.6h1v1h-1zM552.9 364.7h1v1h-1zM553.7 197.6h1v1h-1zM553.4 219.7h1v1h-1zM554.0 215.5h1v1h-1zM553.3 267.6h1v1h-1zM553.4 422.4h1v1h-1zM553.5 222.2h1v1h-1zM554.3 466.8h1v1h-1zM554.6 183.2h1v1h-1zM554.4 187.6h1v1h-1zM554.1 216.0h1v1h-1zM554.0 246.2h1v1h-1zM555.0 395.7h1v1h-1zM554.3 286.6h1v1h-1zM555.0 347.0h1v1h-1zM554.8 454.6h1v1h-1zM554.7 368.8h1v1h-1zM554.9 211.5h1v1h-1zM554.7 438.4h1v1h-1zM554.8 474.1h1v1h-1zM555.7 313.3h1v1h-1zM555.4 297.4h1v1h-1zM555.7 195.0h1v1h-1zM555.4 206.4h1v1h-1zM555.7 414.8h1v1h-1zM556.1 335.3h1v1h-1zM556.0 181.6h1v1h-1zM555.9 263.0h1v1h-1zM556.1 285.5h1v1h-1zM556.7 263.1h1v1h-1zM555.8 193.6h1v1h-1zM556.3 267.7h1v1h-1zM556.1 535.4h1v1h-1zM556.2 233.3h1v1h-1zM556.3 344.5h1v1h-1zM557.1 337.7h1v1h-1zM556.9 307.9h1v1h-1zM557.0 453.5h1v1h-1zM556.9 242.4h1v1h-1zM557.1 510.2h1v1h-1zM557.3 217.6h1v1h-1zM557.7 206.2h1v1h-1zM557.1 335.9h1v1h-1zM557.3 199.0h1v1h-1zM557.4 353.1h1v1h-1zM557.8 180.6h1v1h-1zM557.9 177.7h1v1h-1zM558.2 339.9h1v1h-1zM558.6 190.3h1v1h-1zM558.6 407.4h1v1h-1zM558.0 181.8h1v1h-1zM558.3 390.7h1v1h-1zM558.5 252.3h1v1h-1zM558.9 226.3h1v1h-1zM558.7 210.1h1v1h-1zM558.5 313.5h1v1h-1zM558.5 337.8h1v1h-1zM558.8 190.3h1v1h-1zM559.2 273.9h1v1h-1zM558.9 527.8h1v1h-1zM559.3 200.4h1v1h-1zM559.3 546.2h1v1h-1zM560.0 385.2h1v1h-1zM559.8 387.6h1v1h-1zM560.2 174.5h1v1h-1zM559.8 390.2h1v1h-1zM559.9 174.2h1v1h-1zM560.5 550.2h1v1h-1zM560.0 550.6h1v1h-1zM560.3 550.9h1v1h-1zM559.8 551.2h1v1h-1zM560.1 551.5h1v1h-1zM560.3 551.7h1v1h-1zM560.3 396.0h1v1h-1zM560.6 173.3h1v1h-1zM561.2 397.1h1v1h-1zM560.6 173.1h1v1h-1zM560.5 552.9h1v1h-1zM561.2 551.9h1v1h-1zM561.1 173.6h1v1h-1zM560.8 392.2h1v1h-1zM561.7 405.4h1v1h-1zM561.9 171.8h1v1h-1zM561.8 171.7h1v1h-1zM562.0 549.4h1v1h-1zM562.1 171.6h1v1h-1zM562.4 407.3h1v1h-1zM561.6 557.3h1v1h-1zM562.5 557.1h1v1h-1zM562.4 411.4h1v1h-1zM562.7 546.6h1v1h-1zM562.7 402.8h1v1h-1zM562.6 372.1h1v1h-1zM562.8 543.2h1v1h-1zM562.4 553.4h1v1h-1zM562.6 415.6h1v1h-1zM562.5 300.4h1v1h-1zM562.9 407.6h1v1h-1zM563.4 560.7h1v1h-1zM563.0 182.1h1v1h-1zM563.7 528.8h1v1h-1zM563.1 424.1h1v1h-1zM563.6 553.6h1v1h-1zM563.3 487.5h1v1h-1zM563.8 549.3h1v1h-1zM564.1 565.5h1v1h-1zM564.3 482.0h1v1h-1zM564.3 248.3h1v1h-1zM563.7 178.1h1v1h-1zM564.4 275.6h1v1h-1zM564.1 552.3h1v1h-1zM564.4 516.7h1v1h-1zM564.1 437.6h1v1h-1zM564.5 431.6h1v1h-1zM564.9 554.3h1v1h-1zM564.4 437.1h1v1h-1zM565.0 501.5h1v1h-1zM565.4 289.3h1v1h-1zM565.1 374.6h1v1h-1zM565.0 571.5h1v1h-1zM565.0 440.4h1v1h-1zM565.4 229.1h1v1h-1zM565.4 474.1h1v1h-1zM565.8 262.4h1v1h-1zM565.9 449.8h1v1h-1zM566.0 405.0h1v1h-1zM566.2 255.7h1v1h-1zM566.3 482.0h1v1h-1zM566.3 222.9h1v1h-1zM566.0 305.6h1v1h-1zM566.4 194.1h1v1h-1zM566.3 576.1h1v1h-1zM566.1 452.1h1v1h-1zM566.7 189.7h1v1h-1zM566.3 196.7h1v1h-1zM567.0 289.4h1v1h-1zM566.9 186.5h1v1h-1zM566.6 397.0h1v1h-1zM567.0 193.7h1v1h-1zM567.2 205.6h1v1h-1zM567.0 533.8h1v1h-1zM567.8 348.2h1v1h-1zM568.0 216.1h1v1h-1zM567.2 560.8h1v1h-1zM567.9 200.5h1v1h-1zM567.7 192.7h1v1h-1zM568.2 235.8h1v1h-1zM568.4 583.4h1v1h-1zM568.1 476.9h1v1h-1zM568.3 475.0h1v1h-1zM568.2 403.6h1v1h-1zM568.6 176.2h1v1h-1zM569.0 558.3h1v1h-1zM568.4 387.8h1v1h-1zM568.2 363.8h1v1h-1zM569.3 347.5h1v1h-1zM568.4 215.1h1v1h-1zM569.2 291.7h1v1h-1zM569.2 212.3h1v1h-1zM569.1 272.8h1v1h-1zM569.7 588.0h1v1h-1zM569.0 163.7h1v1h-1zM569.2 203.0h1v1h-1zM569.9 223.9h1v1h-1zM569.2 168.0h1v1h-1zM569.6 332.6h1v1h-1zM569.6 171.8h1v1h-1zM569.9 467.2h1v1h-1zM570.3 293.8h1v1h-1zM570.7 215.1h1v1h-1zM570.0 267.0h1v1h-1zM569.9 292.8h1v1h-1zM570.7 243.6h1v1h-1zM571.0 165.7h1v1h-1zM570.2 451.6h1v1h-1zM570.9 506.7h1v1h-1zM571.0 573.3h1v1h-1zM571.1 572.6h1v1h-1zM571.2 529.8h1v1h-1zM571.0 341.2h1v1h-1zM571.7 461.7h1v1h-1zM571.1 161.8h1v1h-1zM571.9 159.4h1v1h-1zM572.1 400.7h1v1h-1zM572.0 267.7h1v1h-1zM571.7 267.3h1v1h-1zM572.3 218.0h1v1h-1zM571.7 207.0h1v1h-1zM572.1 493.9h1v1h-1zM572.2 480.6h1v1h-1zM571.9 483.9h1v1h-1zM572.9 473.7h1v1h-1zM572.2 187.6h1v1h-1zM572.6 597.8h1v1h-1zM572.3 221.3h1v1h-1zM572.6 354.5h1v1h-1zM573.2 302.1h1v1h-1zM573.2 182.2h1v1h-1zM573.0 350.7h1v1h-1zM573.3 466.2h1v1h-1zM573.0 225.6h1v1h-1zM573.6 445.4h1v1h-1zM573.9 280.1h1v1h-1zM573.1 281.2h1v1h-1zM573.5 516.9h1v1h-1zM573.6 154.2h1v1h-1zM573.5 288.7h1v1h-1zM574.4 207.1h1v1h-1zM574.3 528.8h1v1h-1zM574.3 153.1h1v1h-1zM574.4 152.9h1v1h-1zM574.6 554.5h1v1h-1zM574.3 609.8h1v1h-1zM574.3 533.8h1v1h-1zM574.3 557.2h1v1h-1zM574.5 209.7h1v1h-1zM574.6 524.6h1v1h-1zM575.3 202.1h1v1h-1zM574.9 613.6h1v1h-1zM575.1 528.7h1v1h-1zM575.5 547.2h1v1h-1zM575.9 567.3h1v1h-1zM575.1 260.6h1v1h-1zM575.7 616.6h1v1h-1zM575.6 556.2h1v1h-1zM575.5 524.7h1v1h-1zM575.7 448.1h1v1h-1zM576.3 577.6h1v1h-1zM575.9 307.9h1v1h-1zM576.3 493.9h1v1h-1zM576.3 618.2h1v1h-1zM575.9 187.6h1v1h-1zM576.9 172.3h1v1h-1zM577.0 417.6h1v1h-1zM577.0 557.9h1v1h-1zM576.7 195.7h1v1h-1zM576.8 166.5h1v1h-1zM577.2 613.9h1v1h-1zM577.6 300.6h1v1h-1zM577.2 195.2h1v1h-1zM577.1 274.7h1v1h-1zM577.4 587.8h1v1h-1zM577.6 148.7h1v1h-1zM577.7 199.3h1v1h-1zM578.1 342.5h1v1h-1zM577.9 288.3h1v1h-1zM578.2 625.0h1v1h-1zM578.0 504.1h1v1h-1zM578.1 183.5h1v1h-1zM578.6 532.4h1v1h-1zM578.1 160.3h1v1h-1zM578.2 611.5h1v1h-1zM578.5 198.5h1v1h-1zM578.2 441.8h1v1h-1zM578.4 316.2h1v1h-1zM578.8 148.0h1v1h-1zM579.0 409.8h1v1h-1zM579.5 316.1h1v1h-1zM578.7 220.4h1v1h-1zM578.7 145.7h1v1h-1zM579.5 626.0h1v1h-1zM579.8 240.1h1v1h-1zM579.1 313.0h1v1h-1zM579.4 449.7h1v1h-1zM579.9 403.2h1v1h-1zM579.9 318.2h1v1h-1zM580.3 187.9h1v1h-1zM580.2 581.7h1v1h-1zM580.5 146.2h1v1h-1zM580.0 147.4h1v1h-1zM580.5 535.6h1v1h-1zM580.4 541.1h1v1h-1zM580.8 284.7h1v1h-1zM536.8 229.1h1v1h-1zM536.7 466.5h1v1h-1zM536.9 364.5h1v1h-1zM536.7 254.4h1v1h-1zM537.3 236.4h1v1h-1zM536.9 407.0h1v1h-1zM537.2 256.5h1v1h-1zM537.3 253.3h1v1h-1zM537.3 355.7h1v1h-1zM537.8 378.0h1v1h-1zM537.7 408.7h1v1h-1zM537.7 350.5h1v1h-1zM537.9 448.6h1v1h-1zM538.0 208.3h1v1h-1zM537.7 228.2h1v1h-1zM537.8 419.5h1v1h-1zM538.2 371.3h1v1h-1zM537.8 361.5h1v1h-1zM538.6 455.7h1v1h-1zM538.7 470.9h1v1h-1zM538.6 461.1h1v1h-1zM538.4 213.2h1v1h-1zM539.2 473.0h1v1h-1zM539.0 472.5h1v1h-1zM539.3 354.2h1v1h-1zM539.2 403.4h1v1h-1zM539.2 221.4h1v1h-1zM539.0 355.5h1v1h-1zM539.0 465.0h1v1h-1zM539.7 230.3h1v1h-1zM539.6 388.1h1v1h-1zM539.3 205.8h1v1h-1zM539.4 231.4h1v1h-1zM539.8 339.6h1v1h-1zM540.0 386.8h1v1h-1zM540.3 209.4h1v1h-1zM540.1 476.1h1v1h-1zM540.0 216.9h1v1h-1zM540.5 364.7h1v1h-1zM540.0 231.7h1v1h-1zM540.2 238.2h1v1h-1zM540.5 269.6h1v1h-1zM540.8 389.3h1v1h-1zM540.3 479.9h1v1h-1zM540.5 480.4h1v1h-1zM541.2 391.0h1v1h-1zM541.0 328.5h1v1h-1zM541.1 271.1h1v1h-1zM541.3 201.9h1v1h-1zM541.1 336.0h1v1h-1zM542.0 455.4h1v1h-1zM542.0 453.4h1v1h-1zM541.8 203.4h1v1h-1zM541.4 274.1h1v1h-1zM542.1 434.7h1v1h-1zM542.3 367.2h1v1h-1zM541.9 250.3h1v1h-1zM541.9 236.0h1v1h-1zM542.5 211.1h1v1h-1zM542.5 201.1h1v1h-1zM542.4 237.7h1v1h-1zM542.4 469.0h1v1h-1zM543.1 477.7h1v1h-1zM542.4 205.8h1v1h-1zM542.7 473.8h1v1h-1zM543.0 265.2h1v1h-1zM543.2 269.3h1v1h-1zM543.0 351.5h1v1h-1zM543.4 384.6h1v1h-1zM543.0 198.8h1v1h-1zM543.5 447.8h1v1h-1zM543.2 199.1h1v1h-1zM543.6 267.4h1v1h-1zM544.0 271.3h1v1h-1zM543.6 208.9h1v1h-1zM543.7 392.2h1v1h-1zM544.6 297.1h1v1h-1zM544.1 332.5h1v1h-1zM543.9 207.0h1v1h-1zM544.3 298.7h1v1h-1zM544.3 197.8h1v1h-1zM544.9 406.2h1v1h-1zM545.1 487.5h1v1h-1zM545.1 390.9h1v1h-1zM545.1 289.7h1v1h-1zM545.1 439.6h1v1h-1zM544.7 322.2h1v1h-1zM545.4 238.1h1v1h-1zM545.2 421.6h1v1h-1zM545.2 237.7h1v1h-1zM545.6 283.0h1v1h-1zM545.3 206.8h1v1h-1zM546.2 312.7h1v1h-1zM545.9 275.5h1v1h-1zM546.1 211.6h1v1h-1zM545.6 270.4h1v1h-1zM545.6 288.9h1v1h-1zM545.9 256.9h1v1h-1zM546.0 493.8h1v1h-1zM546.5 248.2h1v1h-1zM546.7 289.5h1v1h-1zM547.0 300.0h1v1h-1zM546.3 242.1h1v1h-1zM546.8 306.6h1v1h-1zM547.1 432.6h1v1h-1zM546.9 251.4h1v1h-1zM546.7 235.5h1v1h-1zM546.8 257.7h1v1h-1zM546.8 193.9h1v1h-1zM547.2 296.8h1v1h-1zM547.2 329.6h1v1h-1zM548.0 198.6h1v1h-1zM547.8 222.5h1v1h-1zM547.4 498.0h1v1h-1zM548.1 288.6h1v1h-1zM548.0 219.2h1v1h-1zM548.4 335.9h1v1h-1zM547.9 308.5h1v1h-1zM548.1 195.2h1v1h-1zM548.4 504.9h1v1h-1zM548.5 390.1h1v1h-1zM548.2 446.2h1v1h-1zM549.0 375.1h1v1h-1zM548.5 252.7h1v1h-1zM548.9 499.6h1v1h-1zM549.1 227.9h1v1h-1zM549.0 256.4h1v1h-1zM549.0 489.9h1v1h-1zM549.5 278.5h1v1h-1zM549.4 194.8h1v1h-1zM549.7 278.2h1v1h-1zM549.9 485.9h1v1h-1zM550.1 216.6h1v1h-1zM549.8 273.2h1v1h-1zM549.8 356.2h1v1h-1zM550.4 490.5h1v1h-1zM550.6 509.6h1v1h-1zM550.6 508.9h1v1h-1zM550.0 293.3h1v1h-1zM550.8 258.2h1v1h-1zM550.6 390.9h1v1h-1zM550.6 514.1h1v1h-1zM550.3 514.3h1v1h-1zM550.5 320.2h1v1h-1zM551.3 231.8h1v1h-1zM550.8 320.2h1v1h-1zM551.1 235.2h1v1h-1zM551.1 488.1h1v1h-1zM551.2 323.2h1v1h-1zM551.3 516.1h1v1h-1zM551.3 395.0h1v1h-1zM552.0 230.3h1v1h-1zM551.7 192.2h1v1h-1zM551.6 385.2h1v1h-1zM551.6 275.4h1v1h-1zM552.3 335.3h1v1h-1zM552.4 492.4h1v1h-1zM552.5 309.0h1v1h-1zM552.4 187.0h1v1h-1zM552.2 422.0h1v1h-1zM552.2 196.5h1v1h-1zM552.5 509.0h1v1h-1zM552.3 401.6h1v1h-1zM552.6 184.7h1v1h-1zM552.7 488.2h1v1h-1zM552.6 213.0h1v1h-1zM552.8 204.6h1v1h-1zM552.8 516.9h1v1h-1zM553.2 190.4h1v1h-1zM553.8 486.4h1v1h-1zM554.0 427.9h1v1h-1zM553.2 438.7h1v1h-1zM553.8 316.6h1v1h-1zM553.3 192.2h1v1h-1zM554.1 421.4h1v1h-1zM554.1 234.6h1v1h-1zM554.1 525.9h1v1h-1zM554.0 513.7h1v1h-1zM554.3 436.9h1v1h-1zM553.9 362.6h1v1h-1zM554.7 182.4h1v1h-1zM554.9 279.0h1v1h-1zM554.3 199.7h1v1h-1zM555.3 218.4h1v1h-1zM554.6 186.2h1v1h-1zM555.4 448.4h1v1h-1zM555.6 201.9h1v1h-1zM555.1 243.3h1v1h-1zM555.6 235.9h1v1h-1zM555.5 259.7h1v1h-1zM555.3 492.5h1v1h-1zM555.8 461.5h1v1h-1zM555.6 185.6h1v1h-1zM555.5 208.8h1v1h-1zM556.2 529.8h1v1h-1zM555.7 323.7h1v1h-1zM556.5 279.3h1v1h-1zM555.9 323.4h1v1h-1zM556.1 496.0h1v1h-1zM556.7 313.5h1v1h-1zM556.8 359.2h1v1h-1zM556.5 391.4h1v1h-1zM556.8 199.0h1v1h-1zM557.2 205.0h1v1h-1zM556.7 241.5h1v1h-1zM556.8 214.2h1v1h-1zM556.7 369.1h1v1h-1zM557.4 304.0h1v1h-1zM557.5 430.7h1v1h-1zM557.0 461.0h1v1h-1zM557.7 205.8h1v1h-1zM557.4 480.4h1v1h-1zM557.7 190.8h1v1h-1zM557.9 532.1h1v1h-1zM558.0 540.3h1v1h-1zM558.1 201.3h1v1h-1zM558.0 504.7h1v1h-1zM558.4 179.2h1v1h-1zM558.0 528.6h1v1h-1zM558.8 176.4h1v1h-1zM558.4 344.8h1v1h-1zM558.9 407.5h1v1h-1zM558.8 449.7h1v1h-1zM558.8 231.0h1v1h-1zM558.9 202.0h1v1h-1zM559.0 504.2h1v1h-1zM559.0 298.2h1v1h-1zM559.3 339.3h1v1h-1zM559.3 475.9h1v1h-1zM559.7 382.6h1v1h-1zM559.3 175.1h1v1h-1zM559.9 174.8h1v1h-1zM559.6 548.9h1v1h-1zM560.2 174.4h1v1h-1zM560.2 549.8h1v1h-1zM559.6 392.1h1v1h-1zM560.5 392.8h1v1h-1zM560.5 393.6h1v1h-1zM560.5 394.2h1v1h-1zM560.1 394.9h1v1h-1zM560.8 395.5h1v1h-1zM560.7 173.4h1v1h-1zM560.4 552.2h1v1h-1zM560.9 173.2h1v1h-1zM560.5 552.7h1v1h-1zM561.2 398.1h1v1h-1zM560.8 395.4h1v1h-1zM561.0 551.2h1v1h-1zM560.8 172.1h1v1h-1zM561.3 173.9h1v1h-1zM561.6 556.3h1v1h-1zM561.8 556.6h1v1h-1zM561.6 388.6h1v1h-1zM561.6 556.9h1v1h-1zM561.5 173.7h1v1h-1zM561.9 408.5h1v1h-1zM562.4 408.1h1v1h-1zM562.6 174.7h1v1h-1zM562.7 381.2h1v1h-1zM562.0 171.8h1v1h-1zM562.1 173.7h1v1h-1zM562.5 372.6h1v1h-1zM562.8 398.1h1v1h-1zM562.4 175.6h1v1h-1zM562.5 245.6h1v1h-1zM563.3 172.2h1v1h-1zM563.6 416.6h1v1h-1zM563.1 526.0h1v1h-1zM563.6 337.8h1v1h-1zM563.6 179.3h1v1h-1zM563.8 398.0h1v1h-1zM563.5 254.3h1v1h-1zM564.1 386.7h1v1h-1zM563.4 429.0h1v1h-1zM563.7 244.6h1v1h-1zM564.1 349.0h1v1h-1zM563.8 537.1h1v1h-1zM564.5 289.0h1v1h-1zM564.6 393.9h1v1h-1zM564.7 309.9h1v1h-1zM564.9 187.9h1v1h-1zM564.7 182.7h1v1h-1zM564.4 398.9h1v1h-1zM564.6 187.0h1v1h-1zM564.4 278.2h1v1h-1zM564.9 262.0h1v1h-1zM565.2 169.1h1v1h-1zM565.4 444.2h1v1h-1zM565.5 189.2h1v1h-1zM565.2 395.2h1v1h-1zM565.9 230.2h1v1h-1zM565.6 315.4h1v1h-1zM565.4 198.1h1v1h-1zM566.2 167.3h1v1h-1zM566.1 330.0h1v1h-1zM566.2 242.0h1v1h-1zM566.2 410.9h1v1h-1zM565.7 233.1h1v1h-1zM566.4 490.1h1v1h-1zM566.6 456.2h1v1h-1zM566.7 199.6h1v1h-1zM566.3 502.7h1v1h-1zM566.7 482.6h1v1h-1zM567.0 259.8h1v1h-1zM567.3 511.8h1v1h-1zM566.7 164.0h1v1h-1zM567.2 490.9h1v1h-1zM566.8 457.2h1v1h-1zM567.0 345.7h1v1h-1zM567.3 180.7h1v1h-1zM567.0 428.0h1v1h-1zM567.5 413.7h1v1h-1zM568.1 471.1h1v1h-1zM567.6 493.5h1v1h-1zM567.6 376.0h1v1h-1zM567.6 476.0h1v1h-1zM568.2 231.1h1v1h-1zM568.1 228.2h1v1h-1zM568.4 163.3h1v1h-1zM568.3 541.5h1v1h-1zM568.5 406.6h1v1h-1zM568.5 161.4h1v1h-1zM568.5 168.3h1v1h-1zM568.3 179.2h1v1h-1zM568.7 429.8h1v1h-1zM569.2 253.0h1v1h-1zM568.9 437.5h1v1h-1zM569.5 289.4h1v1h-1zM568.8 488.5h1v1h-1zM569.6 578.8h1v1h-1zM569.8 463.0h1v1h-1zM569.3 405.7h1v1h-1zM569.6 565.6h1v1h-1zM569.6 192.2h1v1h-1zM569.8 554.3h1v1h-1zM570.4 214.3h1v1h-1zM570.3 247.9h1v1h-1zM569.8 428.9h1v1h-1zM570.8 300.5h1v1h-1zM570.6 249.3h1v1h-1zM570.8 354.5h1v1h-1zM570.9 572.5h1v1h-1zM571.1 193.3h1v1h-1zM571.1 282.0h1v1h-1zM570.7 445.8h1v1h-1zM571.2 443.9h1v1h-1zM571.3 332.8h1v1h-1zM571.1 181.5h1v1h-1zM571.7 205.0h1v1h-1zM570.9 584.2h1v1h-1zM571.5 591.2h1v1h-1zM572.0 157.8h1v1h-1zM571.7 297.6h1v1h-1zM571.7 298.3h1v1h-1zM571.5 420.0h1v1h-1zM571.7 450.4h1v1h-1zM571.9 255.5h1v1h-1zM572.7 232.1h1v1h-1zM572.3 237.4h1v1h-1zM572.2 220.8h1v1h-1zM572.9 506.4h1v1h-1zM572.7 515.7h1v1h-1zM572.5 410.6h1v1h-1zM573.0 168.1h1v1h-1zM572.4 230.3h1v1h-1zM573.0 522.3h1v1h-1zM573.1 170.5h1v1h-1zM572.8 208.6h1v1h-1zM573.5 398.4h1v1h-1zM572.9 182.8h1v1h-1zM573.2 269.7h1v1h-1zM573.8 267.5h1v1h-1zM573.6 300.6h1v1h-1zM574.0 607.1h1v1h-1zM573.9 252.7h1v1h-1zM574.0 448.9h1v1h-1zM574.2 327.4h1v1h-1zM573.7 610.3h1v1h-1zM573.8 611.0h1v1h-1zM574.8 392.1h1v1h-1zM574.7 551.1h1v1h-1zM574.3 339.2h1v1h-1zM574.9 399.1h1v1h-1zM575.2 441.1h1v1h-1zM575.2 317.0h1v1h-1zM575.1 462.8h1v1h-1zM575.1 562.8h1v1h-1zM575.3 326.3h1v1h-1zM575.0 372.3h1v1h-1zM575.3 426.3h1v1h-1zM575.9 309.3h1v1h-1zM575.5 571.6h1v1h-1zM575.5 395.7h1v1h-1zM575.8 316.3h1v1h-1zM576.2 182.2h1v1h-1zM576.4 455.1h1v1h-1zM576.6 216.9h1v1h-1zM576.7 250.7h1v1h-1zM575.9 576.5h1v1h-1zM576.4 504.8h1v1h-1zM576.6 550.9h1v1h-1zM576.8 156.4h1v1h-1zM576.3 399.4h1v1h-1zM576.7 480.6h1v1h-1zM576.8 568.8h1v1h-1zM577.1 563.1h1v1h-1zM577.0 227.6h1v1h-1zM577.0 481.8h1v1h-1zM577.0 276.5h1v1h-1zM577.6 484.0h1v1h-1zM577.3 623.8h1v1h-1zM577.3 469.4h1v1h-1zM578.1 171.1h1v1h-1zM577.7 248.9h1v1h-1zM577.7 597.1h1v1h-1zM577.6 268.7h1v1h-1zM578.1 516.3h1v1h-1zM578.0 332.5h1v1h-1zM578.4 587.5h1v1h-1zM578.2 555.4h1v1h-1zM578.5 471.5h1v1h-1zM578.2 171.8h1v1h-1zM578.3 201.1h1v1h-1zM579.2 625.9h1v1h-1zM579.1 149.5h1v1h-1zM578.9 200.8h1v1h-1zM578.8 408.6h1v1h-1zM579.4 633.2h1v1h-1zM579.4 600.1h1v1h-1zM579.5 355.6h1v1h-1zM580.0 204.7h1v1h-1zM579.5 178.8h1v1h-1zM580.1 146.3h1v1h-1zM579.7 196.8h1v1h-1zM580.4 502.5h1v1h-1zM580.5 464.7h1v1h-1zM580.0 631.6h1v1h-1zM580.2 627.7h1v1h-1zM580.7 338.4h1v1h-1zM580.1 352.2h1v1h-1zM580.6 252.5h1v1h-1z" fill="#346f34"/>
<rect x="554" y="132" width="2" height="527" fill="#e0402e"/>
<rect x="568.6" y="132" width="1.3" height="527" fill="#c85048"/>
<polyline points="365.5,510.2 366,507.9 366.5,505.6 367,503.4 367.5,501.3 368,499.2 368.5,497.1 369,495.1 369.5,493.1 370,491.2 370.5,489.3 371,487.4 371.5,485.5 372,483.7 372.5,482 373,480.2 373.5,478.5 374,476.8 374.5,475.2 375,473.5 375.5,471.9 376,470.3 376.5,468.8 377,467.2 377.5,465.7 378,464.2 378.5,462.7 379,461.3 379.5,459.8 380,458.4 380.5,457 381,455.6 381.5,454.3 382,452.9 382.5,451.6 383,450.3 383.5,449 384,447.7 384.5,446.5 385,445.2 385.5,444 386,442.7 386.5,441.5 387,440.3 387.5,439.2 388,438 388.5,436.8 389,435.7 389.5,434.6 390,433.4 390.5,432.3 391,431.2 391.5,430.1 392,429.1 392.5,428 393,427 393.5,425.9 394,424.9 394.5,423.9 395,422.8 395.5,421.8 396,420.8 396.5,419.9 397,418.9 397.5,417.9 398,417 398.5,416 399,415.1 399.5,414.1 400,413.2 400.5,412.3 401,411.4 401.5,410.5 402,409.6 402.5,408.7 403,407.8 403.5,407 404,406.1 404.5,405.3 405,404.4 405.5,403.6 406,402.7 406.5,401.9 407,401.1 407.5,400.3 408,399.5 408.5,398.7 409,397.9 409.5,397.1 410,396.3 410.5,395.5 411,394.8 411.5,394 412,393.2 412.5,392.5 413,391.7 413.5,391 414,390.3 414.5,389.5 415,388.8 415.5,388.1 416,387.4 416.5,386.6 417,385.9 417.5,385.2 418,384.5 418.5,383.9 419,383.2 419.5,382.5 420,381.8 420.5,381.1 421,380.5 421.5,379.8 422,379.2 422.5,378.5 423,377.8 423.5,377.2 424,376.6 424.5,375.9 425,375.3 425.5,374.7 426,374 426.5,373.4 427,372.8 427.5,372.2 428,371.6 428.5,371 429,370.4 429.5,369.8 430,369.2 430.5,368.6 431,368 431.5,367.4 432,366.9 432.5,366.3 433,365.7 433.5,365.1 434,364.6 434.5,364 435,363.5 435.5,362.9 436,362.3 436.5,361.8 437,361.3 437.5,360.7 438,360.2 438.5,359.6 439,359.1 439.5,358.6 440,358 440.5,357.5 441,357 441.5,356.5 442,356 442.5,355.5 443,355 443.5,354.4 444,353.9 444.5,353.4 445,352.9 445.5,352.5 446,352 446.5,351.5 447,351 447.5,350.5 448,350 448.5,349.5 449,349.1 449.5,348.6 450,348.1 450.5,347.7 451,347.2 451.5,346.7 452,346.3 452.5,345.8 453,345.3 453.5,344.9 454,344.4 454.5,344 455,343.5 455.5,343.1 456,342.7 456.5,342.2 457,341.8 457.5,341.3 458,340.9 458.5,340.5 459,340 459.5,339.6 460,339.2 460.5,338.8 461,338.3 461.5,337.9 462,337.5 462.5,337.1 463,336.7 463.5,336.3 464,335.9 464.5,335.5 465,335.1 465.5,334.6 466,334.2 466.5,333.8 467,333.5 467.5,333.1 468,332.7 468.5,332.3 469,331.9 469.5,331.5 470,331.1 470.5,330.7 471,330.3 471.5,330 472,329.6 472.5,329.2 473,328.8 473.5,328.5 474,328.1 474.5,327.7 475,327.3 475.5,327 476,326.6 476.5,326.2 477,325.9 477.5,325.5 478,325.2 478.5,324.8 479,324.4 479.5,324.1 480,323.7 480.5,323.4 481,323 481.5,322.7 482,322.3 482.5,322 483,321.7 483.5,321.3 484,321 484.5,320.6 485,320.3 485.5,320 486,319.6 486.5,319.3 487,326.3" fill="none" stroke="#6cbf6c" stroke-width="1.9"/>
<polyline points="489.2,294.5 489.7,292.2 490.2,290 490.7,288 491.2,286.2 491.7,284.4 492.2,282.8 492.7,281.2 493.2,279.7 493.7,278.3 494.2,277 494.7,275.6 495.2,274.4 495.7,273.2 496.2,272 496.7,270.8 497.2,269.7 497.7,268.6 498.2,267.6 498.7,266.6 499.2,265.6 499.7,264.6 500.2,263.7 500.7,262.7 501.2,261.8 501.7,260.9 502.2,260.1 502.7,259.2 503.2,258.4 503.7,257.6 504.2,256.8 504.7,256 505.2,255.2 505.7,254.5 506.2,253.7 506.7,253 507.2,252.3 507.7,251.6 508.2,250.9 508.7,250.2 509.2,249.5 509.7,248.8 510.2,248.2 510.7,247.5 511.2,246.9 511.7,246.3 512.2,245.7 512.7,245.1 513.2,244.5 513.7,243.9 514.2,243.3 514.7,242.7 515.2,242.1 515.7,241.6 516.2,241 516.7,240.5 517.2,239.9 517.7,239.4 518.2,238.9 518.7,238.4 519.2,237.8 519.7,237.3 520.2,236.8 520.7,236.3 521.2,235.8 521.7,235.4 522.2,234.9 522.7,234.4 523.2,233.9 523.7,233.5 524.2,233 524.7,230.8" fill="none" stroke="#6cbf6c" stroke-width="1.9"/>
<polyline points="489.2,344.5 489.7,347.1 490.2,349.4 490.7,351.6 491.2,353.6 491.7,355.5 492.2,357.4 492.7,359.1 493.2,360.8 493.7,362.4 494.2,363.9 494.7,365.4 495.2,366.8 495.7,368.2 496.2,369.6 496.7,370.9 497.2,372.2 497.7,373.5 498.2,374.7 498.7,375.9 499.2,377.1 499.7,378.2 500.2,379.3 500.7,380.4 501.2,381.5 501.7,382.6 502.2,383.6 502.7,384.6 503.2,385.6 503.7,386.6 504.2,387.6 504.7,388.5 505.2,389.5 505.7,390.4 506.2,391.3 506.7,392.2 507.2,393.1 507.7,394 508.2,394.8 508.7,395.7 509.2,396.5 509.7,397.4 510.2,398.2 510.7,399 511.2,399.8 511.7,400.6 512.2,401.4 512.7,402.1 513.2,402.9 513.7,403.7 514.2,404.4 514.7,405.1 515.2,405.9 515.7,406.6 516.2,407.3 516.7,408 517.2,408.7 517.7,409.4 518.2,410.1 518.7,410.8 519.2,411.5 519.7,412.1 520.2,412.8 520.7,413.5 521.2,414.1 521.7,414.7 522.2,415.4 522.7,416 523.2,416.6 523.7,417.3 524.2,417.9 524.7,414.4" fill="none" stroke="#6cbf6c" stroke-width="1.9"/>
<polyline points="524.7,421.9 525.2,428 525.7,431.4 526.2,434.1 526.7,436.3 527.2,438.3 527.7,440.1 528.2,441.7 528.7,443.2 529.2,444.6 529.7,445.9 530.2,447.2 530.7,448.4 531.2,449.5 531.7,450.6 532.2,451.7 532.7,452.7 533.2,451.8 533.7,450 534.2,449.1 534.7,448.5" fill="none" stroke="#6cbf6c" stroke-width="1.7"/>
<polyline points="524.7,414.8 525.2,408.6 525.7,405 526.2,402.1 526.7,399.7 527.2,397.5 527.7,395.6 528.2,393.7 528.7,392.1 529.2,390.5 529.7,389 530.2,387.5 530.7,386.2 531.2,384.9 531.7,383.6 532.2,382.4 532.7,381.2 533.2,376.6 533.7,372 534.2,369.2 534.7,367.1" fill="none" stroke="#6cbf6c" stroke-width="1.7"/>
<polyline points="524.7,234.2 525.2,236.9 525.7,238.4 526.2,239.5 526.7,240.4 527.2,241.2 527.7,241.9 528.2,242.6 528.7,243.2 529.2,243.7 529.7,244.2 530.2,244.6 530.7,245.1 531.2,245.5 531.7,245.9 532.2,246.2 532.7,246.6 533.2,245 533.7,242.5 534.2,241 534.7,239.7" fill="none" stroke="#6cbf6c" stroke-width="1.7"/>
<polyline points="524.7,231 525.2,228.2 525.7,226.5 526.2,225.1 526.7,224 527.2,223 527.7,222.1 528.2,221.2 528.7,220.4 529.2,219.7 529.7,219 530.2,218.3 530.7,217.7 531.2,217.1 531.7,216.5 532.2,215.9 532.7,215.3 533.2,215.6 533.7,216.2 534.2,216.4 534.7,216.5" fill="none" stroke="#6cbf6c" stroke-width="1.7"/>
<g>
<rect x="245" y="132" width="2" height="527" fill="#fff"/>
<rect x="487" y="132" width="2" height="527" fill="#fff"/>
<rect x="525" y="132" width="1.2" height="527" fill="#fff"/>
<rect x="532" y="132" width="2" height="527" fill="#fff"/>
<rect x="535" y="132" width="2" height="527" fill="#fff"/>
<rect x="208" y="642" width="381" height="2" fill="#fff"/>
<rect x="333" y="642" width="34" height="2" fill="#5fb15f"/>
<rect x="365" y="612" width="1" height="1" fill="#3a6a3a"/>
</g>
<g fill="#c8443c">
<circle cx="487.8" cy="319.5" r="2"/>
<circle cx="525.5" cy="231" r="2.1"/><circle cx="525.5" cy="421" r="2.1"/>
<circle cx="534.5" cy="211" r="2"/><circle cx="532.8" cy="214.5" r="2"/><circle cx="534.3" cy="217" r="1.8"/><circle cx="534" cy="240" r="2"/><circle cx="532.5" cy="247" r="2"/><circle cx="534" cy="253" r="2"/>
<circle cx="534" cy="367" r="2"/><circle cx="533" cy="381" r="2"/><circle cx="534" cy="397" r="2"/><circle cx="534" cy="451" r="2"/><circle cx="533" cy="458" r="2"/><circle cx="534" cy="463" r="2"/>
</g>
</svg>
<div class="t" style="left:248px;top:136.3px;font-size:9.2px;color:#fff">1.0</div>
<div class="t" style="left:248.5px;top:631px;font-size:9.2px;color:#fff">0</div>
<div class="t" style="left:212.5px;top:346px;font-size:10px;color:#fff;letter-spacing:1.3px">f(x)</div>
<div class="t" style="left:284.5px;top:201.8px;font-size:10.1px;color:#e6e68a">Feigenbaum's constant = Li / Li+1</div>
<div class="t" style="left:406px;top:624px;font-size:9.5px;color:#e6e68a">L0</div>
<div class="t" style="left:499px;top:624px;font-size:9.5px;color:#e6e68a">L1</div>
<div class="t" style="left:520.5px;top:624px;font-size:9.5px;color:#e6e68a">L2</div>
<div class="t" style="left:534.5px;top:624px;font-size:9.5px;color:#e6e68a">L3</div>
<div class="a" style="left:531px;top:624px;width:2px;height:8px;background:#e6e68a"></div>
<div class="t" style="left:573px;top:630.5px;font-size:10px;color:#d05040">114</div>
<div class="t" style="left:208.5px;top:646.3px;font-size:9.2px;color:#fff">30</div>
<div class="t" style="left:246.5px;top:646.3px;font-size:9.2px;color:#fff">40</div>
<div class="t" style="left:287.5px;top:646.3px;font-size:9.2px;color:#fff">50</div>
<div class="t" style="left:331px;top:646.3px;font-size:9.2px;color:#fff">60</div>
<div class="t" style="left:382px;top:646.3px;font-size:9.2px;color:#fff">70</div>
<div class="t" style="left:433px;top:646.3px;font-size:9.2px;color:#fff">80</div>
<div class="t" style="left:484px;top:646.3px;font-size:9.2px;color:#fff">90</div>
<div class="t" style="left:530.5px;top:646.3px;font-size:9.2px;color:#fff">100</div>
<div class="t" style="left:571px;top:646.3px;font-size:9.2px;color:#fff">110</div>

<!-- splitter & command center -->
<div class="a" style="left:0;top:659px;width:827px;height:1px;background:#a0a0a0"></div>
<div class="a" style="left:0;top:660px;width:827px;height:4px;background:#f0f0f0"></div>
<svg class="a" style="left:3px;top:660px" width="20" height="5"><path d="M1 4.5 L4 1 L7 4.5Z M12 1 L18 1 L15 4.5Z" fill="#000"/></svg>
<div class="a" style="left:0;top:664px;width:827px;height:1px;background:#6a6a6a"></div>
<div class="a" style="left:0;top:665px;width:827px;height:16px;background:#bcbce2"></div>
<div class="a" style="left:0;top:681px;width:827px;height:1px;background:#8a8a8a"></div>
<div class="a" style="left:0;top:664px;width:1px;height:27px;background:#6a6a6a"></div>
<div class="t" style="left:1.5px;top:668px;font-size:11.8px;font-weight:bold;color:#10102a">Command Center</div>
</body></html>
